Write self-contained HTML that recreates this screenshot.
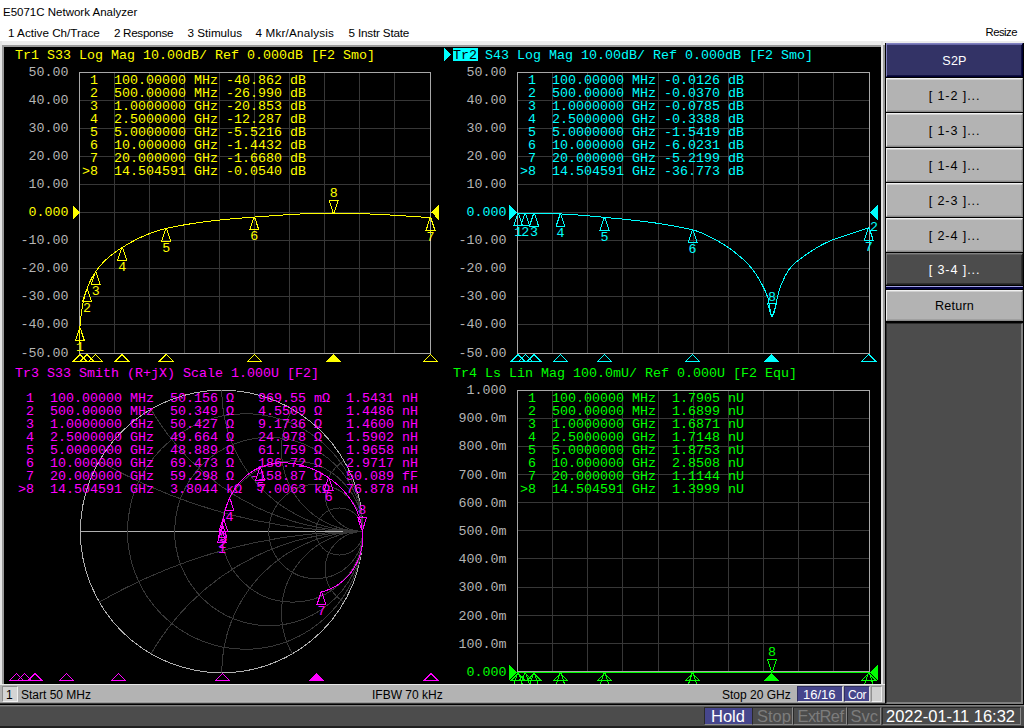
<!DOCTYPE html>
<html><head><meta charset="utf-8"><style>
html,body{margin:0;padding:0;}
body{width:1024px;height:728px;overflow:hidden;position:relative;background:#fff;}
.m{position:absolute;font-family:"Liberation Mono", monospace;font-size:13.33px;line-height:13px;white-space:pre;}
.s{position:absolute;font-family:"Liberation Sans", sans-serif;white-space:pre;line-height:normal;}
svg{position:absolute;left:0;top:0;shape-rendering:crispEdges;}
</style></head><body>
<div style="position:absolute;left:0px;top:41px;width:886px;height:4px;background:#ececec;"></div><div style="position:absolute;left:0px;top:45px;width:886px;height:2px;background:#9a9a9a;"></div><div style="position:absolute;left:0px;top:41px;width:2px;height:650px;background:#e4e4e4;"></div><div style="position:absolute;left:2px;top:45px;width:2px;height:640px;background:#9a9a9a;"></div><div style="position:absolute;left:881px;top:41px;width:2px;height:650px;background:#e4e4e4;"></div><div style="position:absolute;left:883px;top:45px;width:2px;height:640px;background:#9a9a9a;"></div><div style="position:absolute;left:885px;top:43px;width:1px;height:662px;background:#000;"></div><div style="position:absolute;left:4px;top:47px;width:877px;height:637px;background:#000;"></div><div style="position:absolute;left:0px;top:684px;width:885px;height:1px;background:#e8e8e8;"></div><div style="position:absolute;left:0px;top:685px;width:885px;height:16px;background:#b3b3b3;"></div><div style="position:absolute;left:0px;top:701px;width:885px;height:1px;background:#b8b8b8;"></div><div style="position:absolute;left:0px;top:702px;width:885px;height:1px;background:#989898;"></div><div style="position:absolute;left:0px;top:703px;width:1024px;height:1px;background:#383838;"></div><div style="position:absolute;left:0px;top:704px;width:1024px;height:1px;background:#000;"></div><div style="position:absolute;left:0px;top:705px;width:1024px;height:1px;background:#808080;"></div><div style="position:absolute;left:0px;top:706px;width:1024px;height:1px;background:#606060;"></div><div style="position:absolute;left:0px;top:707px;width:1024px;height:19px;background:#4c4c4c;"></div><div style="position:absolute;left:0px;top:726px;width:1024px;height:2px;background:#202020;"></div><div style="position:absolute;left:2px;top:686px;width:16px;height:16px;background:#d4d4d4;box-sizing:border-box;border-top:1px solid #8c8c8c;border-left:1px solid #8c8c8c;border-bottom:1px solid #f0f0f0;border-right:1px solid #f0f0f0"></div><div class="s" style="left:6px;top:688px;font-size:12px;color:#000;">1</div><div class="s" style="left:21px;top:688px;font-size:12px;color:#000;">Start 50 MHz</div><div class="s" style="left:372px;top:688px;font-size:12px;color:#000;">IFBW 70 kHz</div><div class="s" style="left:722px;top:688px;font-size:12px;color:#000;">Stop 20 GHz</div><div style="position:absolute;left:797px;top:686px;width:46px;height:16px;background:#46468c;box-sizing:border-box;border-top:1px solid #303060;border-left:1px solid #303060;border-bottom:1px solid #e0e0e0;border-right:1px solid #e0e0e0"></div><div class="s" style="left:803px;top:686.5px;font-size:13px;color:#fff;">16/16</div><div style="position:absolute;left:844px;top:686px;width:26px;height:16px;background:#46468c;box-sizing:border-box;border-top:1px solid #303060;border-left:1px solid #303060;border-bottom:1px solid #e0e0e0;border-right:1px solid #e0e0e0"></div><div class="s" style="left:848px;top:688px;font-size:12px;color:#fff;letter-spacing:-0.4px">Cor</div><div style="position:absolute;left:871px;top:686px;width:11px;height:16px;background:#d0d0d0;box-sizing:border-box;border-top:1px solid #909090;border-left:1px solid #909090;border-bottom:1px solid #f0f0f0;border-right:1px solid #f0f0f0"></div><div style="position:absolute;left:704px;top:707px;width:49px;height:18px;background:#46468c;box-sizing:border-box;border-top:1px solid #2a2a2a;border-left:1px solid #2a2a2a;border-bottom:1px solid #8a8a8a;border-right:1px solid #8a8a8a"></div><div class="s" style="left:711px;top:707px;font-size:16.5px;color:#fff;letter-spacing:0px">Hold</div><div style="position:absolute;left:752px;top:707px;width:41px;height:18px;background:#4c4c4c;box-sizing:border-box;border-top:1px solid #2a2a2a;border-left:1px solid #2a2a2a;border-bottom:1px solid #8a8a8a;border-right:1px solid #8a8a8a"></div><div class="s" style="left:757px;top:707px;font-size:16.5px;color:#7c7c7c;letter-spacing:0px">Stop</div><div style="position:absolute;left:793px;top:707px;width:54px;height:18px;background:#4c4c4c;box-sizing:border-box;border-top:1px solid #2a2a2a;border-left:1px solid #2a2a2a;border-bottom:1px solid #8a8a8a;border-right:1px solid #8a8a8a"></div><div class="s" style="left:797.5px;top:707px;font-size:16.5px;color:#7c7c7c;letter-spacing:-0.6px">ExtRef</div><div style="position:absolute;left:847px;top:707px;width:34px;height:18px;background:#4c4c4c;box-sizing:border-box;border-top:1px solid #2a2a2a;border-left:1px solid #2a2a2a;border-bottom:1px solid #8a8a8a;border-right:1px solid #8a8a8a"></div><div class="s" style="left:850.5px;top:707px;font-size:16.5px;color:#7c7c7c;letter-spacing:0px">Svc</div><div style="position:absolute;left:882px;top:707px;width:139px;height:18px;background:#4c4c4c;box-sizing:border-box;border-top:1px solid #2a2a2a;border-left:1px solid #2a2a2a;border-bottom:1px solid #8a8a8a;border-right:1px solid #8a8a8a"></div><div class="s" style="left:886px;top:707px;font-size:16.5px;color:#fff;letter-spacing:0px">2022-01-11 16:32</div><div style="position:absolute;left:886px;top:41px;width:138px;height:664px;background:#4c4c4c;"></div><div style="position:absolute;left:886px;top:41px;width:138px;height:2px;background:#ececec;"></div><div style="position:absolute;left:1023px;top:43px;width:1px;height:662px;background:#000;"></div><div style="position:absolute;left:886px;top:43px;width:137px;height:247px;background:#000;"></div><div style="position:absolute;left:886px;top:43px;width:137px;height:34px;background:#333366;box-sizing:border-box;border-top:1px solid #8080c0;border-left:1px solid #8080c0;border-bottom:1px solid #000033;border-right:1px solid #000033;box-shadow:inset 0 1px #6a6aa8, inset 0 -1px #101040, inset -1px 0 #101040;"></div><div class="s" style="left:886px;top:43.6px;width:137px;height:34px;line-height:34px;text-align:center;font-size:12.6px;color:#fff;letter-spacing:0.2px">S2P</div><div style="position:absolute;left:886px;top:78px;width:137px;height:34px;background:#b3b3b3;box-sizing:border-box;border-top:1px solid #f0f0f0;border-left:1px solid #f0f0f0;border-bottom:1px solid #888888;border-right:1px solid #888888;box-shadow:inset 0 1px #d0d0d0, inset 0 -1px #a0a0a0, inset -1px 0 #a0a0a0;"></div><div class="s" style="left:886px;top:78.6px;width:137px;height:34px;line-height:34px;text-align:center;font-size:12.6px;color:#000;letter-spacing:0.9px">[ 1-2 ]...</div><div style="position:absolute;left:886px;top:113px;width:137px;height:34px;background:#b3b3b3;box-sizing:border-box;border-top:1px solid #f0f0f0;border-left:1px solid #f0f0f0;border-bottom:1px solid #888888;border-right:1px solid #888888;box-shadow:inset 0 1px #d0d0d0, inset 0 -1px #a0a0a0, inset -1px 0 #a0a0a0;"></div><div class="s" style="left:886px;top:113.6px;width:137px;height:34px;line-height:34px;text-align:center;font-size:12.6px;color:#000;letter-spacing:0.9px">[ 1-3 ]...</div><div style="position:absolute;left:886px;top:148px;width:137px;height:34px;background:#b3b3b3;box-sizing:border-box;border-top:1px solid #f0f0f0;border-left:1px solid #f0f0f0;border-bottom:1px solid #888888;border-right:1px solid #888888;box-shadow:inset 0 1px #d0d0d0, inset 0 -1px #a0a0a0, inset -1px 0 #a0a0a0;"></div><div class="s" style="left:886px;top:148.6px;width:137px;height:34px;line-height:34px;text-align:center;font-size:12.6px;color:#000;letter-spacing:0.9px">[ 1-4 ]...</div><div style="position:absolute;left:886px;top:183px;width:137px;height:34px;background:#b3b3b3;box-sizing:border-box;border-top:1px solid #f0f0f0;border-left:1px solid #f0f0f0;border-bottom:1px solid #888888;border-right:1px solid #888888;box-shadow:inset 0 1px #d0d0d0, inset 0 -1px #a0a0a0, inset -1px 0 #a0a0a0;"></div><div class="s" style="left:886px;top:183.6px;width:137px;height:34px;line-height:34px;text-align:center;font-size:12.6px;color:#000;letter-spacing:0.9px">[ 2-3 ]...</div><div style="position:absolute;left:886px;top:218px;width:137px;height:34px;background:#b3b3b3;box-sizing:border-box;border-top:1px solid #f0f0f0;border-left:1px solid #f0f0f0;border-bottom:1px solid #888888;border-right:1px solid #888888;box-shadow:inset 0 1px #d0d0d0, inset 0 -1px #a0a0a0, inset -1px 0 #a0a0a0;"></div><div class="s" style="left:886px;top:218.6px;width:137px;height:34px;line-height:34px;text-align:center;font-size:12.6px;color:#000;letter-spacing:0.9px">[ 2-4 ]...</div><div style="position:absolute;left:886px;top:253px;width:137px;height:32px;background:#4c4c4c;box-sizing:border-box;border-top:1px solid #808080;border-left:1px solid #808080;border-bottom:1px solid #202020;border-right:1px solid #202020;box-shadow:inset 0 1px #606060, inset 0 -1px #303030, inset -1px 0 #303030;"></div><div class="s" style="left:886px;top:253.6px;width:137px;height:32px;line-height:32px;text-align:center;font-size:12.6px;color:#fff;letter-spacing:0.9px">[ 3-4 ]...</div><div style="position:absolute;left:886px;top:286px;width:137px;height:3px;background:#000040;border-top:1px solid #a0a0e0;box-sizing:border-box"></div><div style="position:absolute;left:886px;top:289px;width:137px;height:1px;background:#000;"></div><div style="position:absolute;left:886px;top:290px;width:137px;height:31px;background:#b3b3b3;box-sizing:border-box;border-top:1px solid #f0f0f0;border-left:1px solid #f0f0f0;border-bottom:1px solid #888888;border-right:1px solid #888888;box-shadow:inset 0 1px #d0d0d0, inset 0 -1px #a0a0a0, inset -1px 0 #a0a0a0;"></div><div class="s" style="left:886px;top:290.6px;width:137px;height:31px;line-height:31px;text-align:center;font-size:12.6px;color:#000;letter-spacing:0.2px">Return</div><div style="position:absolute;left:886px;top:321px;width:137px;height:2px;background:#000;"></div><div style="position:absolute;left:886px;top:323px;width:137px;height:381px;background:#4c4c4c;box-sizing:border-box;border-top:1px solid #2a2a2a;border-left:1px solid #2a2a2a;border-right:2px solid #808080;border-bottom:2px solid #808080"></div><div style="position:absolute;left:886px;top:704px;width:138px;height:1px;background:#000;"></div><div class="s" style="left:3px;top:5.5px;font-size:11.5px;color:#000;">E5071C Network Analyzer</div><div class="s" style="left:8px;top:25.5px;font-size:11.7px;color:#000;letter-spacing:0px">1 Active Ch/Trace</div><div class="s" style="left:114px;top:25.5px;font-size:11.7px;color:#000;letter-spacing:-0.33px">2 Response</div><div class="s" style="left:187.5px;top:25.5px;font-size:11.7px;color:#000;letter-spacing:0px">3 Stimulus</div><div class="s" style="left:255.5px;top:25.5px;font-size:11.7px;color:#000;letter-spacing:0.18px">4 Mkr/Analysis</div><div class="s" style="left:348.5px;top:25.5px;font-size:11.7px;color:#000;letter-spacing:-0.18px">5 Instr State</div><div class="s" style="left:985.5px;top:25.5px;font-size:11.3px;color:#000;letter-spacing:-0.5px">Resize</div>
<svg width="1024" height="728" viewBox="0 0 1024 728">
<clipPath id="blk"><rect x="4" y="47" width="877" height="637"/></clipPath><g clip-path="url(#blk)">
<path d="M114.5 72V354" stroke="#373737" fill="none" shape-rendering="crispEdges"/><path d="M149.5 72V354" stroke="#373737" fill="none" shape-rendering="crispEdges"/><path d="M184.5 72V354" stroke="#373737" fill="none" shape-rendering="crispEdges"/><path d="M219.5 72V354" stroke="#373737" fill="none" shape-rendering="crispEdges"/><path d="M254.5 72V354" stroke="#373737" fill="none" shape-rendering="crispEdges"/><path d="M289.5 72V354" stroke="#373737" fill="none" shape-rendering="crispEdges"/><path d="M324.5 72V354" stroke="#373737" fill="none" shape-rendering="crispEdges"/><path d="M359.5 72V354" stroke="#373737" fill="none" shape-rendering="crispEdges"/><path d="M394.5 72V354" stroke="#373737" fill="none" shape-rendering="crispEdges"/><path d="M79 100.5H431" stroke="#373737" fill="none" shape-rendering="crispEdges"/><path d="M79 128.5H431" stroke="#373737" fill="none" shape-rendering="crispEdges"/><path d="M79 156.5H431" stroke="#373737" fill="none" shape-rendering="crispEdges"/><path d="M79 184.5H431" stroke="#373737" fill="none" shape-rendering="crispEdges"/><path d="M79 212.5H431" stroke="#373737" fill="none" shape-rendering="crispEdges"/><path d="M79 240.5H431" stroke="#373737" fill="none" shape-rendering="crispEdges"/><path d="M79 268.5H431" stroke="#373737" fill="none" shape-rendering="crispEdges"/><path d="M79 296.5H431" stroke="#373737" fill="none" shape-rendering="crispEdges"/><path d="M79 324.5H431" stroke="#373737" fill="none" shape-rendering="crispEdges"/><path d="M79.5 72.5H430.5V353.5H79.5Z" stroke="#a8a8a8" fill="none" shape-rendering="crispEdges"/><path d="M552.5 72V354" stroke="#373737" fill="none" shape-rendering="crispEdges"/><path d="M587.5 72V354" stroke="#373737" fill="none" shape-rendering="crispEdges"/><path d="M622.5 72V354" stroke="#373737" fill="none" shape-rendering="crispEdges"/><path d="M658.5 72V354" stroke="#373737" fill="none" shape-rendering="crispEdges"/><path d="M693.5 72V354" stroke="#373737" fill="none" shape-rendering="crispEdges"/><path d="M728.5 72V354" stroke="#373737" fill="none" shape-rendering="crispEdges"/><path d="M763.5 72V354" stroke="#373737" fill="none" shape-rendering="crispEdges"/><path d="M798.5 72V354" stroke="#373737" fill="none" shape-rendering="crispEdges"/><path d="M833.5 72V354" stroke="#373737" fill="none" shape-rendering="crispEdges"/><path d="M517 100.5H870" stroke="#373737" fill="none" shape-rendering="crispEdges"/><path d="M517 128.5H870" stroke="#373737" fill="none" shape-rendering="crispEdges"/><path d="M517 156.5H870" stroke="#373737" fill="none" shape-rendering="crispEdges"/><path d="M517 184.5H870" stroke="#373737" fill="none" shape-rendering="crispEdges"/><path d="M517 212.5H870" stroke="#373737" fill="none" shape-rendering="crispEdges"/><path d="M517 240.5H870" stroke="#373737" fill="none" shape-rendering="crispEdges"/><path d="M517 268.5H870" stroke="#373737" fill="none" shape-rendering="crispEdges"/><path d="M517 296.5H870" stroke="#373737" fill="none" shape-rendering="crispEdges"/><path d="M517 324.5H870" stroke="#373737" fill="none" shape-rendering="crispEdges"/><path d="M517.5 72.5H869.5V353.5H517.5Z" stroke="#a8a8a8" fill="none" shape-rendering="crispEdges"/><path d="M552.5 390V672" stroke="#373737" fill="none" shape-rendering="crispEdges"/><path d="M587.5 390V672" stroke="#373737" fill="none" shape-rendering="crispEdges"/><path d="M622.5 390V672" stroke="#373737" fill="none" shape-rendering="crispEdges"/><path d="M658.5 390V672" stroke="#373737" fill="none" shape-rendering="crispEdges"/><path d="M693.5 390V672" stroke="#373737" fill="none" shape-rendering="crispEdges"/><path d="M728.5 390V672" stroke="#373737" fill="none" shape-rendering="crispEdges"/><path d="M763.5 390V672" stroke="#373737" fill="none" shape-rendering="crispEdges"/><path d="M798.5 390V672" stroke="#373737" fill="none" shape-rendering="crispEdges"/><path d="M833.5 390V672" stroke="#373737" fill="none" shape-rendering="crispEdges"/><path d="M517 418.5H870" stroke="#373737" fill="none" shape-rendering="crispEdges"/><path d="M517 446.5H870" stroke="#373737" fill="none" shape-rendering="crispEdges"/><path d="M517 474.5H870" stroke="#373737" fill="none" shape-rendering="crispEdges"/><path d="M517 502.5H870" stroke="#373737" fill="none" shape-rendering="crispEdges"/><path d="M517 530.5H870" stroke="#373737" fill="none" shape-rendering="crispEdges"/><path d="M517 558.5H870" stroke="#373737" fill="none" shape-rendering="crispEdges"/><path d="M517 587.5H870" stroke="#373737" fill="none" shape-rendering="crispEdges"/><path d="M517 615.5H870" stroke="#373737" fill="none" shape-rendering="crispEdges"/><path d="M517 643.5H870" stroke="#373737" fill="none" shape-rendering="crispEdges"/><path d="M517.5 390.5H869.5V671.5H517.5Z" stroke="#a8a8a8" fill="none" shape-rendering="crispEdges"/><path d="M444 48L450.5 54.5L444 61Z" fill="#00ffff"/><clipPath id="c1"><rect x="79" y="47" width="365" height="318"/></clipPath><g clip-path="url(#c1)"><path d="M79.00 344.79 L79.08 342.55 L79.17 340.50 L79.25 338.61 L79.34 336.86 L79.42 335.22 L79.50 333.69 L79.59 332.25 L79.67 330.89 L79.76 329.60 L79.84 328.38 L79.93 327.22 L80.01 326.11 L80.09 325.05 L80.18 324.04 L80.26 323.07 L80.35 322.14 L80.43 321.24 L80.51 320.38 L80.60 319.54 L80.68 318.74 L80.77 317.96 L80.85 317.20 L80.93 316.47 L81.02 315.76 L81.10 315.07 L81.19 314.40 L81.27 313.75 L81.36 313.12 L81.44 312.50 L81.52 311.90 L81.61 311.31 L81.69 310.73 L81.78 310.17 L81.86 309.63 L81.94 309.09 L82.03 308.57 L82.11 308.05 L82.20 307.55 L82.28 307.06 L82.36 306.58 L82.45 306.10 L82.53 305.64 L82.62 305.18 L82.70 304.74 L82.78 304.30 L82.87 303.87 L82.95 303.44 L83.04 303.03 L83.12 302.62 L83.21 302.21 L83.29 301.82 L83.37 301.43 L83.46 301.04 L83.54 300.67 L83.63 300.29 L83.71 299.93 L83.79 299.56 L83.88 299.21 L83.96 298.86 L84.05 298.51 L84.13 298.17 L84.21 297.83 L84.30 297.50 L84.38 297.17 L84.47 296.85 L84.55 296.53 L84.64 296.21 L84.72 295.90 L84.80 295.59 L84.89 295.29 L84.97 294.99 L85.06 294.69 L85.14 294.40 L85.22 294.11 L85.31 293.82 L85.39 293.53 L85.48 293.25 L85.56 292.98 L85.64 292.70 L85.73 292.43 L85.81 292.16 L85.90 291.90 L85.98 291.63 L86.07 291.37 L86.15 291.11 L86.23 290.86 L86.32 290.61 L86.40 290.36 L86.49 290.11 L86.57 289.86 L86.65 289.62 L86.74 289.38 L86.82 289.14 L86.91 288.90 L86.99 288.67 L87.07 288.44 L87.16 288.21 L87.24 287.98 L87.33 287.75 L87.41 287.53 L87.50 287.31 L87.58 287.09 L87.66 286.87 L87.75 286.66 L87.83 286.44 L87.92 286.23 L88.00 286.02 L88.08 285.81 L88.17 285.60 L88.25 285.40 L88.34 285.20 L88.42 284.99 L88.50 284.79 L88.59 284.60 L88.67 284.40 L88.76 284.20 L88.84 284.01 L88.93 283.82 L89.01 283.63 L89.09 283.44 L89.18 283.25 L89.26 283.06 L89.35 282.88 L89.43 282.69 L89.51 282.51 L89.60 282.33 L89.68 282.15 L89.77 281.97 L89.85 281.79 L89.93 281.61 L90.02 281.44 L90.10 281.26 L90.19 281.09 L90.27 280.92 L90.35 280.75 L90.44 280.58 L90.52 280.41 L90.61 280.24 L90.69 280.07 L90.78 279.91 L90.86 279.75 L90.94 279.58 L91.03 279.42 L91.11 279.26 L91.20 279.10 L91.28 278.94 L91.36 278.78 L91.45 278.62 L91.53 278.47 L91.62 278.31 L91.70 278.16 L91.78 278.00 L91.87 277.85 L91.95 277.70 L92.04 277.54 L92.12 277.39 L92.21 277.24 L92.29 277.10 L92.37 276.95 L92.46 276.80 L92.54 276.65 L92.63 276.51 L92.71 276.36 L92.79 276.22 L92.88 276.08 L92.96 275.93 L93.05 275.79 L93.13 275.65 L93.21 275.51 L93.30 275.37 L93.38 275.23 L93.47 275.09 L93.55 274.96 L93.64 274.82 L93.72 274.68 L93.80 274.55 L93.89 274.41 L93.97 274.28 L94.06 274.14 L94.14 274.01 L94.22 273.88 L94.31 273.75 L94.39 273.62 L94.48 273.49 L94.56 273.36 L94.64 273.23 L94.73 273.10 L94.81 272.97 L94.90 272.84 L94.98 272.72 L95.07 272.59 L95.15 272.46 L95.23 272.34 L95.32 272.21 L95.40 272.09 L95.49 271.96 L95.57 271.84 L95.65 271.72 L95.74 271.60 L96.16 271.00 L96.58 270.41 L97.00 269.83 L97.41 269.27 L97.83 268.72 L98.25 268.18 L98.67 267.64 L99.09 267.12 L99.51 266.61 L99.93 266.11 L100.35 265.62 L100.77 265.13 L101.18 264.65 L101.60 264.19 L102.02 263.72 L102.44 263.27 L102.86 262.83 L103.28 262.39 L103.70 261.95 L104.12 261.53 L104.54 261.11 L104.96 260.70 L105.37 260.29 L105.79 259.89 L106.21 259.49 L106.63 259.10 L107.05 258.72 L107.47 258.34 L107.89 257.97 L108.31 257.60 L108.73 257.23 L109.15 256.87 L109.56 256.52 L109.98 256.17 L110.40 255.82 L110.82 255.48 L111.24 255.14 L111.66 254.81 L112.08 254.48 L112.50 254.15 L112.92 253.83 L113.34 253.51 L113.75 253.20 L114.17 252.89 L114.59 252.58 L115.01 252.27 L115.43 251.97 L115.85 251.67 L116.27 251.38 L116.69 251.09 L117.11 250.80 L117.52 250.51 L117.94 250.23 L118.36 249.95 L118.78 249.67 L119.20 249.40 L119.62 249.12 L120.04 248.86 L120.46 248.59 L120.88 248.32 L121.30 248.06 L121.71 247.80 L122.13 247.55 L122.55 247.29 L122.97 247.04 L123.39 246.78 L123.81 246.53 L124.23 246.28 L124.65 246.02 L125.07 245.77 L125.49 245.52 L125.90 245.27 L126.32 245.02 L126.74 244.77 L127.16 244.53 L127.58 244.28 L128.00 244.04 L128.42 243.80 L128.84 243.55 L129.26 243.31 L129.68 243.07 L130.09 242.84 L130.51 242.60 L130.93 242.37 L131.35 242.13 L131.77 241.90 L132.19 241.67 L132.61 241.44 L133.03 241.22 L133.45 240.99 L133.86 240.77 L134.28 240.54 L134.70 240.32 L135.12 240.10 L135.54 239.89 L135.96 239.67 L136.38 239.46 L136.80 239.24 L137.22 239.03 L137.64 238.82 L138.05 238.62 L138.47 238.41 L138.89 238.21 L139.31 238.00 L139.73 237.80 L140.15 237.60 L140.57 237.41 L140.99 237.21 L141.41 237.02 L141.83 236.83 L142.24 236.64 L142.66 236.45 L143.08 236.26 L143.50 236.08 L143.92 235.89 L144.34 235.71 L144.76 235.53 L145.18 235.35 L145.60 235.18 L146.02 235.00 L146.43 234.83 L146.85 234.66 L147.27 234.49 L147.69 234.32 L148.11 234.16 L148.53 233.99 L148.95 233.83 L149.37 233.67 L149.79 233.51 L150.20 233.35 L150.62 233.20 L151.04 233.04 L151.46 232.89 L151.88 232.74 L152.30 232.59 L152.72 232.44 L153.14 232.29 L153.56 232.15 L153.98 232.01 L154.39 231.87 L154.81 231.73 L155.23 231.59 L155.65 231.45 L156.07 231.32 L156.49 231.18 L156.91 231.05 L157.33 230.92 L157.75 230.79 L158.17 230.67 L158.58 230.54 L159.00 230.42 L159.42 230.29 L159.84 230.17 L160.26 230.05 L160.68 229.94 L161.10 229.82 L161.52 229.70 L161.94 229.59 L162.36 229.48 L162.77 229.37 L163.19 229.26 L163.61 229.15 L164.03 229.05 L164.45 228.94 L164.87 228.84 L165.29 228.74 L165.71 228.64 L166.13 228.54 L166.55 228.44 L166.96 228.34 L167.38 228.24 L167.80 228.15 L168.22 228.05 L168.64 227.96 L169.06 227.87 L169.48 227.77 L169.90 227.68 L170.32 227.59 L170.73 227.50 L171.15 227.41 L171.57 227.32 L171.99 227.23 L172.41 227.14 L172.83 227.05 L173.25 226.97 L173.67 226.88 L174.09 226.79 L174.51 226.71 L174.92 226.62 L175.34 226.54 L175.76 226.46 L176.18 226.37 L176.60 226.29 L177.02 226.21 L177.44 226.13 L177.86 226.05 L178.28 225.97 L178.70 225.89 L179.11 225.81 L179.53 225.73 L179.95 225.65 L180.37 225.58 L180.79 225.50 L181.21 225.42 L181.63 225.35 L182.05 225.27 L182.47 225.20 L182.89 225.12 L183.30 225.05 L183.72 224.97 L184.14 224.90 L184.56 224.83 L184.98 224.76 L185.40 224.69 L185.82 224.61 L186.24 224.54 L186.66 224.47 L187.07 224.40 L187.49 224.33 L187.91 224.27 L188.33 224.20 L188.75 224.13 L189.17 224.06 L189.59 223.99 L190.01 223.93 L190.43 223.86 L190.85 223.80 L191.26 223.73 L191.68 223.66 L192.10 223.60 L192.52 223.54 L192.94 223.47 L193.36 223.41 L193.78 223.35 L194.20 223.28 L194.62 223.22 L195.04 223.16 L195.45 223.10 L195.87 223.04 L196.29 222.97 L196.71 222.91 L197.13 222.85 L197.55 222.79 L197.97 222.73 L198.39 222.68 L198.81 222.62 L199.23 222.56 L199.64 222.50 L200.06 222.44 L200.48 222.39 L200.90 222.33 L201.32 222.27 L201.74 222.21 L202.16 222.16 L202.58 222.10 L203.00 222.05 L203.41 221.99 L203.83 221.94 L204.25 221.88 L204.67 221.83 L205.09 221.78 L205.51 221.72 L205.93 221.67 L206.35 221.62 L206.77 221.56 L207.19 221.51 L207.60 221.46 L208.02 221.41 L208.44 221.35 L208.86 221.30 L209.28 221.25 L209.70 221.20 L210.12 221.15 L210.54 221.10 L210.96 221.05 L211.38 221.00 L211.79 220.95 L212.21 220.90 L212.63 220.86 L213.05 220.81 L213.47 220.76 L213.89 220.71 L214.31 220.66 L214.73 220.62 L215.15 220.57 L215.57 220.52 L215.98 220.47 L216.40 220.43 L216.82 220.38 L217.24 220.34 L217.66 220.29 L218.08 220.24 L218.50 220.20 L218.92 220.15 L219.34 220.11 L219.76 220.06 L220.17 220.02 L220.59 219.98 L221.01 219.93 L221.43 219.89 L221.85 219.85 L222.27 219.80 L222.69 219.76 L223.11 219.72 L223.53 219.67 L223.94 219.63 L224.36 219.59 L224.78 219.55 L225.20 219.51 L225.62 219.46 L226.04 219.42 L226.46 219.38 L226.88 219.34 L227.30 219.30 L227.72 219.26 L228.13 219.22 L228.55 219.18 L228.97 219.14 L229.39 219.10 L229.81 219.06 L230.23 219.02 L230.65 218.98 L231.07 218.94 L231.49 218.91 L231.91 218.87 L232.32 218.83 L232.74 218.79 L233.16 218.75 L233.58 218.71 L234.00 218.68 L234.42 218.64 L234.84 218.60 L235.26 218.57 L235.68 218.53 L236.10 218.49 L236.51 218.46 L236.93 218.42 L237.35 218.38 L237.77 218.35 L238.19 218.31 L238.61 218.28 L239.03 218.24 L239.45 218.21 L239.87 218.17 L240.28 218.14 L240.70 218.10 L241.12 218.07 L241.54 218.03 L241.96 218.00 L242.38 217.96 L242.80 217.93 L243.22 217.90 L243.64 217.86 L244.06 217.83 L244.47 217.80 L244.89 217.76 L245.31 217.73 L245.73 217.70 L246.15 217.66 L246.57 217.63 L246.99 217.60 L247.41 217.57 L247.83 217.53 L248.25 217.50 L248.66 217.47 L249.08 217.44 L249.50 217.41 L249.92 217.38 L250.34 217.34 L250.76 217.31 L251.18 217.28 L251.60 217.25 L252.02 217.22 L252.44 217.19 L252.85 217.16 L253.27 217.13 L253.69 217.10 L254.11 217.07 L254.53 217.04 L254.95 217.01 L255.37 216.98 L255.79 216.95 L256.21 216.92 L256.62 216.89 L257.04 216.86 L257.46 216.83 L257.88 216.80 L258.30 216.77 L258.72 216.74 L259.14 216.70 L259.56 216.67 L259.98 216.64 L260.40 216.61 L260.81 216.58 L261.23 216.55 L261.65 216.52 L262.07 216.49 L262.49 216.46 L262.91 216.42 L263.33 216.39 L263.75 216.36 L264.17 216.33 L264.59 216.30 L265.00 216.27 L265.42 216.24 L265.84 216.21 L266.26 216.17 L266.68 216.14 L267.10 216.11 L267.52 216.08 L267.94 216.05 L268.36 216.02 L268.78 215.99 L269.19 215.96 L269.61 215.93 L270.03 215.89 L270.45 215.86 L270.87 215.83 L271.29 215.80 L271.71 215.77 L272.13 215.74 L272.55 215.71 L272.96 215.68 L273.38 215.65 L273.80 215.62 L274.22 215.59 L274.64 215.56 L275.06 215.53 L275.48 215.50 L275.90 215.47 L276.32 215.44 L276.74 215.41 L277.15 215.38 L277.57 215.35 L277.99 215.32 L278.41 215.29 L278.83 215.26 L279.25 215.23 L279.67 215.20 L280.09 215.18 L280.51 215.15 L280.93 215.12 L281.34 215.09 L281.76 215.06 L282.18 215.03 L282.60 215.01 L283.02 214.98 L283.44 214.95 L283.86 214.92 L284.28 214.90 L284.70 214.87 L285.12 214.84 L285.53 214.81 L285.95 214.79 L286.37 214.76 L286.79 214.74 L287.21 214.71 L287.63 214.68 L288.05 214.66 L288.47 214.63 L288.89 214.61 L289.31 214.58 L289.72 214.55 L290.14 214.53 L290.56 214.51 L290.98 214.48 L291.40 214.46 L291.82 214.43 L292.24 214.41 L292.66 214.38 L293.08 214.36 L293.49 214.34 L293.91 214.31 L294.33 214.29 L294.75 214.27 L295.17 214.24 L295.59 214.22 L296.01 214.20 L296.43 214.18 L296.85 214.15 L297.27 214.13 L297.68 214.11 L298.10 214.09 L298.52 214.07 L298.94 214.05 L299.36 214.03 L299.78 214.01 L300.20 213.99 L300.62 213.97 L301.04 213.95 L301.46 213.93 L301.87 213.91 L302.29 213.89 L302.71 213.87 L303.13 213.85 L303.55 213.83 L303.97 213.81 L304.39 213.80 L304.81 213.78 L305.23 213.76 L305.65 213.74 L306.06 213.73 L306.48 213.71 L306.90 213.69 L307.32 213.68 L307.74 213.66 L308.16 213.64 L308.58 213.63 L309.00 213.61 L309.42 213.60 L309.83 213.58 L310.25 213.57 L310.67 213.55 L311.09 213.54 L311.51 213.53 L311.93 213.51 L312.35 213.50 L312.77 213.48 L313.19 213.47 L313.61 213.46 L314.02 213.45 L314.44 213.43 L314.86 213.42 L315.28 213.41 L315.70 213.40 L316.12 213.39 L316.54 213.38 L316.96 213.37 L317.38 213.36 L317.80 213.35 L318.21 213.34 L318.63 213.33 L319.05 213.32 L319.47 213.31 L319.89 213.30 L320.31 213.29 L320.73 213.28 L321.15 213.27 L321.57 213.26 L321.99 213.26 L322.40 213.25 L322.82 213.24 L323.24 213.24 L323.66 213.23 L324.08 213.22 L324.50 213.22 L324.92 213.21 L325.34 213.21 L325.76 213.20 L326.17 213.20 L326.59 213.19 L327.01 213.19 L327.43 213.18 L327.85 213.18 L328.27 213.17 L328.69 213.17 L329.11 213.17 L329.53 213.17 L329.95 213.16 L330.36 213.16 L330.78 213.16 L331.20 213.16 L331.62 213.16 L332.04 213.15 L332.46 213.15 L332.88 213.15 L333.30 213.15 L333.72 213.15 L334.14 213.15 L334.55 213.15 L334.97 213.15 L335.39 213.15 L335.81 213.16 L336.23 213.16 L336.65 213.16 L337.07 213.16 L337.49 213.16 L337.91 213.17 L338.33 213.17 L338.74 213.17 L339.16 213.18 L339.58 213.18 L340.00 213.18 L340.42 213.19 L340.84 213.19 L341.26 213.20 L341.68 213.20 L342.10 213.21 L342.52 213.21 L342.93 213.22 L343.35 213.22 L343.77 213.23 L344.19 213.24 L344.61 213.24 L345.03 213.25 L345.45 213.26 L345.87 213.26 L346.29 213.27 L346.70 213.28 L347.12 213.29 L347.54 213.29 L347.96 213.30 L348.38 213.31 L348.80 213.32 L349.22 213.33 L349.64 213.34 L350.06 213.35 L350.48 213.36 L350.89 213.37 L351.31 213.38 L351.73 213.39 L352.15 213.40 L352.57 213.41 L352.99 213.42 L353.41 213.43 L353.83 213.44 L354.25 213.45 L354.67 213.47 L355.08 213.48 L355.50 213.49 L355.92 213.50 L356.34 213.51 L356.76 213.53 L357.18 213.54 L357.60 213.55 L358.02 213.57 L358.44 213.58 L358.86 213.59 L359.27 213.61 L359.69 213.62 L360.11 213.63 L360.53 213.65 L360.95 213.66 L361.37 213.68 L361.79 213.69 L362.21 213.71 L362.63 213.72 L363.04 213.74 L363.46 213.75 L363.88 213.77 L364.30 213.78 L364.72 213.80 L365.14 213.82 L365.56 213.83 L365.98 213.85 L366.40 213.87 L366.82 213.88 L367.23 213.90 L367.65 213.92 L368.07 213.93 L368.49 213.95 L368.91 213.97 L369.33 213.99 L369.75 214.00 L370.17 214.02 L370.59 214.04 L371.01 214.06 L371.42 214.08 L371.84 214.10 L372.26 214.11 L372.68 214.13 L373.10 214.15 L373.52 214.17 L373.94 214.19 L374.36 214.21 L374.78 214.23 L375.20 214.25 L375.61 214.27 L376.03 214.29 L376.45 214.31 L376.87 214.33 L377.29 214.35 L377.71 214.37 L378.13 214.39 L378.55 214.41 L378.97 214.43 L379.38 214.45 L379.80 214.47 L380.22 214.50 L380.64 214.52 L381.06 214.54 L381.48 214.56 L381.90 214.58 L382.32 214.60 L382.74 214.62 L383.16 214.65 L383.57 214.67 L383.99 214.69 L384.41 214.71 L384.83 214.74 L385.25 214.76 L385.67 214.78 L386.09 214.80 L386.51 214.83 L386.93 214.85 L387.35 214.87 L387.76 214.90 L388.18 214.92 L388.60 214.94 L389.02 214.97 L389.44 214.99 L389.86 215.01 L390.28 215.04 L390.70 215.06 L391.12 215.09 L391.54 215.11 L391.95 215.13 L392.37 215.16 L392.79 215.18 L393.21 215.21 L393.63 215.23 L394.05 215.26 L394.47 215.28 L394.89 215.31 L395.31 215.33 L395.72 215.36 L396.14 215.38 L396.56 215.41 L396.98 215.43 L397.40 215.46 L397.82 215.48 L398.24 215.51 L398.66 215.53 L399.08 215.56 L399.50 215.59 L399.91 215.61 L400.33 215.64 L400.75 215.66 L401.17 215.69 L401.59 215.72 L402.01 215.74 L402.43 215.77 L402.85 215.80 L403.27 215.82 L403.69 215.85 L404.10 215.88 L404.52 215.90 L404.94 215.93 L405.36 215.96 L405.78 215.98 L406.20 216.01 L406.62 216.04 L407.04 216.07 L407.46 216.09 L407.88 216.12 L408.29 216.15 L408.71 216.18 L409.13 216.20 L409.55 216.23 L409.97 216.26 L410.39 216.29 L410.81 216.31 L411.23 216.34 L411.65 216.37 L412.07 216.40 L412.48 216.43 L412.90 216.45 L413.32 216.48 L413.74 216.51 L414.16 216.54 L414.58 216.57 L415.00 216.60 L415.42 216.62 L415.84 216.65 L416.25 216.68 L416.67 216.71 L417.09 216.74 L417.51 216.77 L417.93 216.80 L418.35 216.83 L418.77 216.85 L419.19 216.88 L419.61 216.91 L420.03 216.94 L420.44 216.97 L420.86 217.00 L421.28 217.03 L421.70 217.06 L422.12 217.09 L422.54 217.12 L422.96 217.15 L423.38 217.18 L423.80 217.21 L424.22 217.24 L424.63 217.27 L425.05 217.30 L425.47 217.33 L425.89 217.36 L426.31 217.39 L426.73 217.42 L427.15 217.45 L427.57 217.48 L427.99 217.51 L428.41 217.54 L428.82 217.57 L429.24 217.60 L429.66 217.63 L430.08 217.66 L430.50 217.69" stroke="#ffff00" stroke-width="1" fill="none" stroke-linejoin="round"/></g><path d="M517.30 213.03 L517.59 213.03 L517.89 213.03 L518.18 213.04 L518.47 213.04 L518.77 213.04 L519.06 213.04 L519.35 213.05 L519.65 213.05 L519.94 213.05 L520.23 213.05 L520.52 213.06 L520.82 213.06 L521.11 213.06 L521.40 213.06 L521.70 213.07 L521.99 213.07 L522.28 213.07 L522.58 213.08 L522.87 213.08 L523.16 213.08 L523.46 213.08 L523.75 213.09 L524.04 213.09 L524.34 213.09 L524.63 213.10 L524.92 213.10 L525.22 213.10 L525.51 213.11 L525.80 213.11 L526.09 213.11 L526.39 213.12 L526.68 213.12 L526.97 213.12 L527.27 213.13 L527.56 213.13 L527.85 213.13 L528.15 213.14 L528.44 213.14 L528.73 213.14 L529.03 213.15 L529.32 213.15 L529.61 213.16 L529.91 213.16 L530.20 213.16 L530.49 213.17 L530.79 213.17 L531.08 213.18 L531.37 213.18 L531.66 213.18 L531.96 213.19 L532.25 213.19 L532.54 213.20 L532.84 213.20 L533.13 213.21 L533.42 213.21 L533.72 213.22 L534.01 213.22 L534.30 213.23 L534.60 213.23 L534.89 213.24 L535.18 213.24 L535.48 213.25 L535.77 213.25 L536.06 213.26 L536.36 213.26 L536.65 213.27 L536.94 213.27 L537.23 213.28 L537.53 213.28 L537.82 213.29 L538.11 213.30 L538.41 213.30 L538.70 213.31 L538.99 213.31 L539.29 213.32 L539.58 213.33 L539.87 213.33 L540.17 213.34 L540.46 213.35 L540.75 213.35 L541.05 213.36 L541.34 213.36 L541.63 213.37 L541.93 213.38 L542.22 213.38 L542.51 213.39 L542.81 213.40 L543.10 213.41 L543.39 213.41 L543.68 213.42 L543.98 213.43 L544.27 213.43 L544.56 213.44 L544.86 213.45 L545.15 213.46 L545.44 213.46 L545.74 213.47 L546.03 213.48 L546.32 213.49 L546.62 213.50 L546.91 213.50 L547.20 213.51 L547.50 213.52 L547.79 213.53 L548.08 213.54 L548.38 213.54 L548.67 213.55 L548.96 213.56 L549.25 213.57 L549.55 213.58 L549.84 213.59 L550.13 213.60 L550.43 213.60 L550.72 213.61 L551.01 213.62 L551.31 213.63 L551.60 213.64 L551.89 213.65 L552.19 213.66 L552.48 213.67 L552.77 213.68 L553.07 213.69 L553.36 213.70 L553.65 213.71 L553.95 213.72 L554.24 213.73 L554.53 213.74 L554.82 213.75 L555.12 213.76 L555.41 213.77 L555.70 213.78 L556.00 213.79 L556.29 213.80 L556.58 213.81 L556.88 213.82 L557.17 213.83 L557.46 213.84 L557.76 213.85 L558.05 213.86 L558.34 213.87 L558.64 213.88 L558.93 213.89 L559.22 213.90 L559.52 213.92 L559.81 213.93 L560.10 213.94 L560.39 213.95 L560.69 213.96 L560.98 213.97 L561.27 213.98 L561.57 214.00 L561.86 214.01 L562.15 214.02 L562.45 214.03 L562.74 214.05 L563.03 214.06 L563.33 214.07 L563.62 214.09 L563.91 214.10 L564.21 214.12 L564.50 214.13 L564.79 214.14 L565.09 214.16 L565.38 214.17 L565.67 214.19 L565.96 214.20 L566.26 214.22 L566.55 214.23 L566.84 214.25 L567.14 214.27 L567.43 214.28 L567.72 214.30 L568.02 214.32 L568.31 214.33 L568.60 214.35 L568.90 214.37 L569.19 214.38 L569.48 214.40 L569.78 214.42 L570.07 214.44 L570.36 214.45 L570.66 214.47 L570.95 214.49 L571.24 214.51 L571.53 214.53 L571.83 214.55 L572.12 214.56 L572.41 214.58 L572.71 214.60 L573.00 214.62 L573.29 214.64 L573.59 214.66 L573.88 214.68 L574.17 214.70 L574.47 214.72 L574.76 214.74 L575.05 214.76 L575.35 214.78 L575.64 214.80 L575.93 214.82 L576.23 214.85 L576.52 214.87 L576.81 214.89 L577.10 214.91 L577.40 214.93 L577.69 214.95 L577.98 214.97 L578.28 215.00 L578.57 215.02 L578.86 215.04 L579.16 215.06 L579.45 215.09 L579.74 215.11 L580.04 215.13 L580.33 215.15 L580.62 215.18 L580.92 215.20 L581.21 215.22 L581.50 215.25 L581.80 215.27 L582.09 215.29 L582.38 215.32 L582.67 215.34 L582.97 215.36 L583.26 215.39 L583.55 215.41 L583.85 215.44 L584.14 215.46 L584.43 215.49 L584.73 215.51 L585.02 215.54 L585.31 215.56 L585.61 215.58 L585.90 215.61 L586.19 215.63 L586.49 215.66 L586.78 215.69 L587.07 215.71 L587.37 215.74 L587.66 215.76 L587.95 215.79 L588.24 215.81 L588.54 215.84 L588.83 215.86 L589.12 215.89 L589.42 215.92 L589.71 215.94 L590.00 215.97 L590.30 216.00 L590.59 216.02 L590.88 216.05 L591.18 216.07 L591.47 216.10 L591.76 216.13 L592.06 216.15 L592.35 216.18 L592.64 216.21 L592.94 216.23 L593.23 216.26 L593.52 216.29 L593.82 216.32 L594.11 216.34 L594.40 216.37 L594.69 216.40 L594.99 216.42 L595.28 216.45 L595.57 216.48 L595.87 216.51 L596.16 216.53 L596.45 216.56 L596.75 216.59 L597.04 216.62 L597.33 216.64 L597.63 216.67 L597.92 216.70 L598.21 216.73 L598.51 216.76 L598.80 216.78 L599.09 216.81 L599.39 216.84 L599.68 216.87 L599.97 216.90 L600.26 216.92 L600.56 216.95 L600.85 216.98 L601.14 217.01 L601.44 217.04 L601.73 217.06 L602.02 217.09 L602.32 217.12 L602.61 217.15 L602.90 217.18 L603.20 217.21 L603.49 217.23 L603.78 217.26 L604.08 217.29 L604.37 217.32 L604.66 217.35 L604.96 217.38 L605.25 217.40 L605.54 217.43 L605.83 217.46 L606.13 217.49 L606.42 217.52 L606.71 217.55 L607.01 217.57 L607.30 217.60 L607.59 217.63 L607.89 217.66 L608.18 217.69 L608.47 217.72 L608.77 217.74 L609.06 217.77 L609.35 217.80 L609.65 217.83 L609.94 217.86 L610.23 217.89 L610.53 217.91 L610.82 217.94 L611.11 217.97 L611.40 218.00 L611.70 218.03 L611.99 218.06 L612.28 218.08 L612.58 218.11 L612.87 218.14 L613.16 218.17 L613.46 218.20 L613.75 218.23 L614.04 218.26 L614.34 218.28 L614.63 218.31 L614.92 218.34 L615.22 218.37 L615.51 218.40 L615.80 218.43 L616.10 218.46 L616.39 218.49 L616.68 218.51 L616.97 218.54 L617.27 218.57 L617.56 218.60 L617.85 218.63 L618.15 218.66 L618.44 218.69 L618.73 218.72 L619.03 218.75 L619.32 218.78 L619.61 218.81 L619.91 218.83 L620.20 218.86 L620.49 218.89 L620.79 218.92 L621.08 218.95 L621.37 218.98 L621.67 219.01 L621.96 219.04 L622.25 219.07 L622.54 219.10 L622.84 219.13 L623.13 219.16 L623.42 219.19 L623.72 219.22 L624.01 219.25 L624.30 219.28 L624.60 219.31 L624.89 219.34 L625.18 219.37 L625.48 219.40 L625.77 219.43 L626.06 219.46 L626.36 219.49 L626.65 219.52 L626.94 219.55 L627.24 219.58 L627.53 219.61 L627.82 219.65 L628.11 219.68 L628.41 219.71 L628.70 219.74 L628.99 219.77 L629.29 219.80 L629.58 219.83 L629.87 219.86 L630.17 219.90 L630.46 219.93 L630.75 219.96 L631.05 219.99 L631.34 220.02 L631.63 220.05 L631.93 220.09 L632.22 220.12 L632.51 220.15 L632.81 220.18 L633.10 220.21 L633.39 220.25 L633.68 220.28 L633.98 220.31 L634.27 220.34 L634.56 220.38 L634.86 220.41 L635.15 220.44 L635.44 220.48 L635.74 220.51 L636.03 220.54 L636.32 220.57 L636.62 220.61 L636.91 220.64 L637.20 220.68 L637.50 220.71 L637.79 220.74 L638.08 220.78 L638.38 220.81 L638.67 220.84 L638.96 220.88 L639.25 220.91 L639.55 220.95 L639.84 220.98 L640.13 221.02 L640.43 221.05 L640.72 221.09 L641.01 221.12 L641.31 221.16 L641.60 221.19 L641.89 221.23 L642.19 221.26 L642.48 221.30 L642.77 221.33 L643.07 221.37 L643.36 221.40 L643.65 221.44 L643.95 221.48 L644.24 221.51 L644.53 221.55 L644.83 221.59 L645.12 221.62 L645.41 221.66 L645.70 221.70 L646.00 221.73 L646.29 221.77 L646.58 221.81 L646.88 221.85 L647.17 221.88 L647.46 221.92 L647.76 221.96 L648.05 222.00 L648.34 222.03 L648.64 222.07 L648.93 222.11 L649.22 222.15 L649.52 222.19 L649.81 222.23 L650.10 222.27 L650.40 222.31 L650.69 222.34 L650.98 222.38 L651.27 222.42 L651.57 222.46 L651.86 222.50 L652.15 222.54 L652.45 222.58 L652.74 222.62 L653.03 222.66 L653.33 222.70 L653.62 222.74 L653.91 222.79 L654.21 222.83 L654.50 222.87 L654.79 222.91 L655.09 222.95 L655.38 222.99 L655.67 223.03 L655.97 223.08 L656.26 223.12 L656.55 223.16 L656.84 223.20 L657.14 223.25 L657.43 223.29 L657.72 223.33 L658.02 223.38 L658.31 223.42 L658.60 223.46 L658.90 223.51 L659.19 223.55 L659.48 223.59 L659.78 223.64 L660.07 223.68 L660.36 223.73 L660.66 223.77 L660.95 223.82 L661.24 223.86 L661.54 223.91 L661.83 223.95 L662.12 224.00 L662.41 224.04 L662.71 224.09 L663.00 224.14 L663.29 224.18 L663.59 224.23 L663.88 224.28 L664.17 224.32 L664.47 224.37 L664.76 224.42 L665.05 224.46 L665.35 224.51 L665.64 224.56 L665.93 224.61 L666.23 224.66 L666.52 224.70 L666.81 224.75 L667.11 224.80 L667.40 224.85 L667.69 224.90 L667.98 224.95 L668.28 225.00 L668.57 225.05 L668.86 225.10 L669.16 225.15 L669.45 225.20 L669.74 225.25 L670.04 225.30 L670.33 225.35 L670.62 225.40 L670.92 225.46 L671.21 225.51 L671.50 225.56 L671.80 225.61 L672.09 225.66 L672.38 225.72 L672.68 225.77 L672.97 225.82 L673.26 225.88 L673.55 225.93 L673.85 225.98 L674.14 226.04 L674.43 226.09 L674.73 226.15 L675.02 226.20 L675.31 226.26 L675.61 226.31 L675.90 226.37 L676.19 226.42 L676.49 226.48 L676.78 226.53 L677.07 226.59 L677.37 226.65 L677.66 226.70 L677.95 226.76 L678.25 226.82 L678.54 226.87 L678.83 226.93 L679.12 226.99 L679.42 227.05 L679.71 227.11 L680.00 227.16 L680.30 227.22 L680.59 227.28 L680.88 227.34 L681.18 227.40 L681.47 227.46 L681.76 227.52 L682.06 227.58 L682.35 227.64 L682.64 227.70 L682.94 227.76 L683.23 227.82 L683.52 227.89 L683.82 227.95 L684.11 228.01 L684.40 228.07 L684.69 228.14 L684.99 228.20 L685.28 228.26 L685.57 228.32 L685.87 228.39 L686.16 228.45 L686.45 228.52 L686.75 228.58 L687.04 228.64 L687.33 228.71 L687.63 228.78 L687.92 228.84 L688.21 228.91 L688.51 228.97 L688.80 229.04 L689.09 229.11 L689.39 229.17 L689.68 229.24 L689.97 229.31 L690.26 229.37 L690.56 229.44 L690.85 229.51 L691.14 229.58 L691.44 229.65 L691.73 229.72 L692.02 229.79 L692.32 229.86 L692.61 229.93 L692.90 230.00 L693.20 230.07 L693.49 230.14 L693.78 230.22 L694.08 230.30 L694.37 230.38 L694.66 230.46 L694.96 230.55 L695.25 230.64 L695.54 230.72 L695.84 230.81 L696.13 230.91 L696.42 231.00 L696.71 231.10 L697.01 231.19 L697.30 231.29 L697.59 231.39 L697.89 231.49 L698.18 231.60 L698.47 231.70 L698.77 231.81 L699.06 231.92 L699.35 232.03 L699.65 232.14 L699.94 232.26 L700.23 232.37 L700.53 232.49 L700.82 232.60 L701.11 232.72 L701.41 232.84 L701.70 232.97 L701.99 233.09 L702.28 233.21 L702.58 233.34 L702.87 233.47 L703.16 233.59 L703.46 233.72 L703.75 233.86 L704.04 233.99 L704.34 234.12 L704.63 234.25 L704.92 234.39 L705.22 234.53 L705.51 234.66 L705.80 234.80 L706.10 234.94 L706.39 235.08 L706.68 235.22 L706.98 235.37 L707.27 235.51 L707.56 235.65 L707.85 235.80 L708.15 235.94 L708.44 236.09 L708.73 236.24 L709.03 236.39 L709.32 236.54 L709.61 236.69 L709.91 236.84 L710.20 236.99 L710.49 237.14 L710.79 237.29 L711.08 237.45 L711.37 237.60 L711.67 237.75 L711.96 237.91 L712.25 238.06 L712.55 238.22 L712.84 238.38 L713.13 238.53 L713.42 238.69 L713.72 238.85 L714.01 239.01 L714.30 239.17 L714.60 239.32 L714.89 239.48 L715.18 239.64 L715.48 239.80 L715.77 239.96 L716.06 240.12 L716.36 240.28 L716.65 240.45 L716.94 240.61 L717.24 240.77 L717.53 240.93 L717.82 241.09 L718.12 241.25 L718.41 241.41 L718.70 241.57 L718.99 241.74 L719.29 241.90 L719.58 242.06 L719.87 242.23 L720.17 242.39 L720.46 242.56 L720.75 242.73 L721.05 242.90 L721.34 243.08 L721.63 243.25 L721.93 243.42 L722.22 243.60 L722.51 243.78 L722.81 243.96 L723.10 244.14 L723.39 244.32 L723.69 244.50 L723.98 244.69 L724.27 244.87 L724.56 245.06 L724.86 245.25 L725.15 245.44 L725.44 245.63 L725.74 245.82 L726.03 246.01 L726.32 246.21 L726.62 246.41 L726.91 246.60 L727.20 246.80 L727.50 247.00 L727.79 247.20 L728.08 247.40 L728.38 247.61 L728.67 247.81 L728.96 248.02 L729.26 248.23 L729.55 248.43 L729.84 248.64 L730.13 248.85 L730.43 249.07 L730.72 249.28 L731.01 249.49 L731.31 249.71 L731.60 249.93 L731.89 250.14 L732.19 250.36 L732.48 250.58 L732.77 250.80 L733.07 251.03 L733.36 251.25 L733.65 251.47 L733.95 251.70 L734.24 251.93 L734.53 252.16 L734.83 252.38 L735.12 252.62 L735.41 252.85 L735.70 253.08 L736.00 253.31 L736.29 253.55 L736.58 253.78 L736.88 254.02 L737.17 254.26 L737.46 254.50 L737.76 254.74 L738.05 254.98 L738.34 255.22 L738.64 255.47 L738.93 255.71 L739.22 255.96 L739.52 256.20 L739.81 256.45 L740.10 256.70 L740.40 256.95 L740.69 257.21 L740.98 257.46 L741.27 257.72 L741.57 257.97 L741.86 258.23 L742.15 258.50 L742.45 258.76 L742.74 259.03 L743.03 259.29 L743.33 259.56 L743.62 259.84 L743.91 260.11 L744.21 260.39 L744.50 260.66 L744.79 260.95 L745.09 261.23 L745.38 261.52 L745.67 261.80 L745.97 262.10 L746.26 262.39 L746.55 262.69 L746.85 262.99 L747.14 263.29 L747.43 263.59 L747.72 263.90 L748.02 264.21 L748.31 264.53 L748.60 264.85 L748.90 265.17 L749.19 265.49 L749.48 265.82 L749.78 266.15 L750.07 266.49 L750.36 266.82 L750.66 267.17 L750.95 267.51 L751.24 267.86 L751.54 268.21 L751.83 268.57 L752.12 268.93 L752.42 269.30 L752.71 269.67 L753.00 270.04 L753.29 270.43 L753.59 270.82 L753.88 271.22 L754.17 271.62 L754.47 272.03 L754.76 272.45 L755.05 272.87 L755.35 273.30 L755.64 273.73 L755.93 274.17 L756.23 274.62 L756.52 275.08 L756.81 275.53 L757.11 276.00 L757.40 276.47 L757.69 276.95 L757.99 277.43 L758.28 277.92 L758.57 278.41 L758.86 278.91 L759.16 279.42 L759.45 279.93 L759.74 280.45 L760.04 280.97 L760.33 281.50 L760.62 282.03 L760.92 282.57 L761.21 283.11 L761.50 283.66 L761.80 284.21 L762.09 284.77 L762.38 285.33 L762.68 285.89 L762.97 286.45 L763.26 287.02 L763.56 287.60 L763.85 288.18 L764.14 288.77 L764.43 289.38 L764.73 290.00 L765.02 290.63 L765.31 291.28 L765.61 291.95 L765.90 292.64 L766.19 293.36 L766.49 294.09 L766.78 294.86 L767.07 295.65 L767.37 296.47 L767.66 297.33 L767.95 298.22 L768.25 299.22 L768.54 300.49 L768.83 301.98 L769.13 303.63 L769.42 305.38 L769.71 307.18 L770.00 308.96 L770.30 310.68 L770.59 312.27 L770.88 313.67 L771.18 314.84 L771.47 315.71 L771.76 316.22 L772.06 316.33 L772.35 316.19 L772.64 315.88 L772.94 315.42 L773.23 314.82 L773.52 314.09 L773.82 313.23 L774.11 312.27 L774.40 311.20 L774.70 310.06 L774.99 308.84 L775.28 307.55 L775.57 306.22 L775.87 304.85 L776.16 303.45 L776.45 302.03 L776.75 300.61 L777.04 299.20 L777.33 297.81 L777.63 296.45 L777.92 295.14 L778.21 293.87 L778.51 292.68 L778.80 291.56 L779.09 290.53 L779.39 289.60 L779.68 288.79 L779.97 288.02 L780.27 287.27 L780.56 286.52 L780.85 285.78 L781.14 285.05 L781.44 284.33 L781.73 283.62 L782.02 282.91 L782.32 282.22 L782.61 281.53 L782.90 280.86 L783.20 280.20 L783.49 279.54 L783.78 278.90 L784.08 278.27 L784.37 277.65 L784.66 277.05 L784.96 276.45 L785.25 275.87 L785.54 275.30 L785.84 274.74 L786.13 274.20 L786.42 273.67 L786.71 273.15 L787.01 272.65 L787.30 272.16 L787.59 271.69 L787.89 271.23 L788.18 270.79 L788.47 270.36 L788.77 269.95 L789.06 269.56 L789.35 269.18 L789.65 268.81 L789.94 268.45 L790.23 268.10 L790.53 267.75 L790.82 267.41 L791.11 267.07 L791.41 266.74 L791.70 266.42 L791.99 266.10 L792.28 265.79 L792.58 265.48 L792.87 265.17 L793.16 264.88 L793.46 264.58 L793.75 264.30 L794.04 264.01 L794.34 263.73 L794.63 263.46 L794.92 263.19 L795.22 262.92 L795.51 262.66 L795.80 262.40 L796.10 262.15 L796.39 261.89 L796.68 261.65 L796.98 261.40 L797.27 261.16 L797.56 260.92 L797.86 260.69 L798.15 260.45 L798.44 260.22 L798.73 259.99 L799.03 259.77 L799.32 259.54 L799.61 259.32 L799.91 259.10 L800.20 258.88 L800.49 258.67 L800.79 258.45 L801.08 258.24 L801.37 258.03 L801.67 257.82 L801.96 257.61 L802.25 257.40 L802.55 257.19 L802.84 256.98 L803.13 256.77 L803.43 256.56 L803.72 256.35 L804.01 256.15 L804.30 255.94 L804.60 255.73 L804.89 255.52 L805.18 255.31 L805.48 255.11 L805.77 254.90 L806.06 254.69 L806.36 254.48 L806.65 254.28 L806.94 254.08 L807.24 253.87 L807.53 253.67 L807.82 253.47 L808.12 253.27 L808.41 253.07 L808.70 252.87 L809.00 252.67 L809.29 252.47 L809.58 252.27 L809.87 252.08 L810.17 251.88 L810.46 251.69 L810.75 251.49 L811.05 251.30 L811.34 251.11 L811.63 250.92 L811.93 250.73 L812.22 250.54 L812.51 250.35 L812.81 250.17 L813.10 249.98 L813.39 249.79 L813.69 249.61 L813.98 249.43 L814.27 249.24 L814.57 249.06 L814.86 248.88 L815.15 248.70 L815.44 248.52 L815.74 248.35 L816.03 248.17 L816.32 247.99 L816.62 247.82 L816.91 247.65 L817.20 247.47 L817.50 247.30 L817.79 247.13 L818.08 246.96 L818.38 246.79 L818.67 246.63 L818.96 246.46 L819.26 246.29 L819.55 246.13 L819.84 245.97 L820.14 245.80 L820.43 245.64 L820.72 245.48 L821.01 245.32 L821.31 245.16 L821.60 245.01 L821.89 244.85 L822.19 244.70 L822.48 244.54 L822.77 244.39 L823.07 244.24 L823.36 244.09 L823.65 243.94 L823.95 243.79 L824.24 243.64 L824.53 243.50 L824.83 243.35 L825.12 243.21 L825.41 243.07 L825.71 242.93 L826.00 242.79 L826.29 242.65 L826.58 242.51 L826.88 242.37 L827.17 242.24 L827.46 242.11 L827.76 241.97 L828.05 241.84 L828.34 241.71 L828.64 241.58 L828.93 241.45 L829.22 241.33 L829.52 241.20 L829.81 241.07 L830.10 240.95 L830.40 240.83 L830.69 240.71 L830.98 240.59 L831.28 240.47 L831.57 240.35 L831.86 240.23 L832.15 240.11 L832.45 239.99 L832.74 239.88 L833.03 239.77 L833.33 239.65 L833.62 239.54 L833.91 239.43 L834.21 239.32 L834.50 239.21 L834.79 239.10 L835.09 238.99 L835.38 238.88 L835.67 238.77 L835.97 238.66 L836.26 238.56 L836.55 238.45 L836.85 238.35 L837.14 238.24 L837.43 238.14 L837.72 238.04 L838.02 237.93 L838.31 237.83 L838.60 237.73 L838.90 237.63 L839.19 237.53 L839.48 237.43 L839.78 237.33 L840.07 237.23 L840.36 237.13 L840.66 237.03 L840.95 236.94 L841.24 236.84 L841.54 236.74 L841.83 236.65 L842.12 236.55 L842.42 236.45 L842.71 236.36 L843.00 236.26 L843.29 236.17 L843.59 236.07 L843.88 235.98 L844.17 235.88 L844.47 235.79 L844.76 235.69 L845.05 235.60 L845.35 235.51 L845.64 235.41 L845.93 235.32 L846.23 235.22 L846.52 235.13 L846.81 235.04 L847.11 234.94 L847.40 234.85 L847.69 234.76 L847.99 234.66 L848.28 234.57 L848.57 234.48 L848.87 234.38 L849.16 234.29 L849.45 234.19 L849.74 234.10 L850.04 234.00 L850.33 233.91 L850.62 233.82 L850.92 233.72 L851.21 233.63 L851.50 233.53 L851.80 233.43 L852.09 233.34 L852.38 233.24 L852.68 233.15 L852.97 233.05 L853.26 232.95 L853.56 232.86 L853.85 232.76 L854.14 232.66 L854.44 232.56 L854.73 232.46 L855.02 232.36 L855.31 232.26 L855.61 232.16 L855.90 232.06 L856.19 231.96 L856.49 231.86 L856.78 231.76 L857.07 231.66 L857.37 231.56 L857.66 231.46 L857.95 231.35 L858.25 231.25 L858.54 231.15 L858.83 231.05 L859.13 230.95 L859.42 230.85 L859.71 230.75 L860.01 230.65 L860.30 230.55 L860.59 230.45 L860.88 230.35 L861.18 230.25 L861.47 230.15 L861.76 230.05 L862.06 229.95 L862.35 229.85 L862.64 229.75 L862.94 229.65 L863.23 229.55 L863.52 229.45 L863.82 229.35 L864.11 229.26 L864.40 229.16 L864.70 229.06 L864.99 228.96 L865.28 228.86 L865.58 228.76 L865.87 228.66 L866.16 228.56 L866.45 228.46 L866.75 228.36 L867.04 228.26 L867.33 228.16 L867.63 228.06 L867.92 227.96 L868.21 227.87 L868.51 227.77 L868.80 227.67" stroke="#00ffff" stroke-width="1" fill="none" stroke-linejoin="round"/><path d="M79.28 328.82H80.48L84.38 340.62H75.38Z" stroke="#ffff00" fill="none"/><path d="M79.88 354.50L86.88 361.50H72.88Z" stroke="#ffff00" fill="none"/><path d="M86.33 289.84H87.53L91.43 301.64H82.43Z" stroke="#ffff00" fill="none"/><path d="M86.93 354.50L93.93 361.50H79.93Z" stroke="#ffff00" fill="none"/><path d="M95.14 272.60H96.34L100.24 284.40H91.24Z" stroke="#ffff00" fill="none"/><path d="M95.74 354.50L102.74 361.50H88.74Z" stroke="#ffff00" fill="none"/><path d="M121.57 248.53H122.77L126.67 260.33H117.67Z" stroke="#ffff00" fill="none"/><path d="M122.17 354.50L129.17 361.50H115.17Z" stroke="#ffff00" fill="none"/><path d="M165.61 229.52H166.81L170.71 241.32H161.71Z" stroke="#ffff00" fill="none"/><path d="M166.21 354.50L173.21 361.50H159.21Z" stroke="#ffff00" fill="none"/><path d="M253.71 218.06H254.91L258.81 229.86H249.81Z" stroke="#ffff00" fill="none"/><path d="M254.31 354.50L261.31 361.50H247.31Z" stroke="#ffff00" fill="none"/><path d="M429.90 218.69H431.10L435.00 230.49H426.00Z" stroke="#ffff00" fill="none"/><path d="M430.50 354.50L437.50 361.50H423.50Z" stroke="#ffff00" fill="none"/><path d="M333.08 212.65H334.28L338.18 200.35H329.18Z" stroke="#ffff00" fill="none"/><path d="M333.68 354.00L341.18 361.50H326.18Z" fill="#ffff00"/><path d="M72.5 205L80 212.5L72.5 220Z" fill="#ffff00"/><path d="M438.5 205L431 212.5L438.5 220Z" fill="#ffff00"/><path d="M432 213.5L434.5 216V220M432 220.5H437.5" stroke="#000" fill="none"/><path d="M517.58 214.04H518.78L522.68 225.84H513.68Z" stroke="#00ffff" fill="none"/><path d="M518.18 354.50L525.18 361.50H511.18Z" stroke="#00ffff" fill="none"/><path d="M524.63 214.10H525.83L529.73 225.90H520.73Z" stroke="#00ffff" fill="none"/><path d="M525.23 354.50L532.23 361.50H518.23Z" stroke="#00ffff" fill="none"/><path d="M533.44 214.22H534.64L538.54 226.02H529.54Z" stroke="#00ffff" fill="none"/><path d="M534.04 354.50L541.04 361.50H527.04Z" stroke="#00ffff" fill="none"/><path d="M559.87 214.95H561.07L564.97 226.75H555.97Z" stroke="#00ffff" fill="none"/><path d="M560.47 354.50L567.47 361.50H553.47Z" stroke="#00ffff" fill="none"/><path d="M603.91 218.33H605.11L609.01 230.13H600.01Z" stroke="#00ffff" fill="none"/><path d="M604.51 354.50L611.51 361.50H597.51Z" stroke="#00ffff" fill="none"/><path d="M692.01 230.92H693.21L697.11 242.72H688.11Z" stroke="#00ffff" fill="none"/><path d="M692.61 354.50L699.61 361.50H685.61Z" stroke="#00ffff" fill="none"/><path d="M868.20 228.67H869.40L873.30 240.47H864.30Z" stroke="#00ffff" fill="none"/><path d="M868.80 354.50L875.80 361.50H861.80Z" stroke="#00ffff" fill="none"/><path d="M771.38 315.83H772.58L776.48 303.53H767.48Z" stroke="#00ffff" fill="none"/><path d="M771.98 354.00L779.48 361.50H764.48Z" fill="#00ffff"/><path d="M509 205L516.5 212.5L509 220Z" fill="#00ffff"/><path d="M878 205L870 212.5L878 220Z" fill="#00ffff"/><clipPath id="sc"><circle cx="221.7" cy="531.5" r="141.3"/></clipPath><circle cx="221.7" cy="531.5" r="141.3" stroke="#b0b0b0" fill="none"/><path d="M80.39999999999998 531.5H363.0" stroke="#b0b0b0" fill="none"/><circle cx="245.25" cy="531.5" r="117.75" stroke="#373737" fill="none"/><circle cx="268.80" cy="531.5" r="94.20" stroke="#373737" fill="none"/><circle cx="292.35" cy="531.5" r="70.65" stroke="#373737" fill="none"/><circle cx="315.90" cy="531.5" r="47.10" stroke="#373737" fill="none"/><circle cx="339.45" cy="531.5" r="23.55" stroke="#373737" fill="none"/><g clip-path="url(#sc)"><circle cx="363.00" cy="4.16" r="527.34" stroke="#373737" fill="none"/><circle cx="363.00" cy="1058.84" r="527.34" stroke="#373737" fill="none"/><circle cx="363.00" cy="286.76" r="244.74" stroke="#373737" fill="none"/><circle cx="363.00" cy="776.24" r="244.74" stroke="#373737" fill="none"/><circle cx="363.00" cy="390.20" r="141.30" stroke="#373737" fill="none"/><circle cx="363.00" cy="672.80" r="141.30" stroke="#373737" fill="none"/><circle cx="363.00" cy="449.92" r="81.58" stroke="#373737" fill="none"/><circle cx="363.00" cy="613.08" r="81.58" stroke="#373737" fill="none"/><circle cx="363.00" cy="493.64" r="37.86" stroke="#373737" fill="none"/><circle cx="363.00" cy="569.36" r="37.86" stroke="#373737" fill="none"/></g><path d="M221.93 530.78 L221.93 530.61 L221.93 530.44 L221.93 530.27 L221.93 530.09 L221.94 529.92 L221.94 529.75 L221.95 529.58 L221.96 529.41 L221.97 529.24 L221.98 529.07 L221.99 528.90 L222.01 528.73 L222.02 528.57 L222.04 528.40 L222.06 528.24 L222.08 528.07 L222.10 527.90 L222.12 527.74 L222.14 527.57 L222.16 527.41 L222.18 527.24 L222.21 527.08 L222.23 526.92 L222.25 526.75 L222.28 526.59 L222.30 526.42 L222.32 526.26 L222.35 526.09 L222.37 525.93 L222.40 525.76 L222.42 525.60 L222.44 525.43 L222.46 525.26 L222.48 525.10 L222.51 524.93 L222.53 524.76 L222.55 524.59 L222.57 524.43 L222.60 524.26 L222.62 524.09 L222.65 523.92 L222.67 523.75 L222.70 523.59 L222.72 523.42 L222.75 523.25 L222.77 523.08 L222.80 522.91 L222.83 522.74 L222.85 522.58 L222.88 522.41 L222.91 522.24 L222.93 522.07 L222.96 521.90 L222.99 521.73 L223.02 521.56 L223.04 521.39 L223.07 521.22 L223.10 521.05 L223.13 520.88 L223.15 520.71 L223.18 520.54 L223.21 520.37 L223.24 520.20 L223.27 520.03 L223.29 519.85 L223.32 519.68 L223.35 519.51 L223.37 519.34 L223.40 519.17 L223.43 518.99 L223.46 518.82 L223.48 518.65 L223.51 518.47 L223.54 518.30 L223.56 518.13 L223.59 517.95 L223.62 517.78 L223.65 517.61 L223.67 517.43 L223.70 517.26 L223.73 517.08 L223.76 516.91 L223.79 516.74 L223.82 516.56 L223.85 516.39 L223.89 516.21 L223.92 516.04 L223.95 515.86 L223.98 515.69 L224.01 515.51 L224.05 515.34 L224.08 515.16 L224.11 514.99 L224.15 514.81 L224.18 514.64 L224.22 514.46 L224.25 514.28 L224.29 514.11 L224.33 513.93 L224.36 513.76 L224.40 513.58 L224.44 513.40 L224.48 513.22 L224.52 513.05 L224.56 512.87 L224.60 512.69 L224.64 512.51 L224.68 512.34 L224.72 512.16 L224.76 511.98 L224.80 511.80 L224.85 511.62 L224.89 511.44 L224.93 511.26 L224.98 511.08 L225.02 510.90 L225.07 510.72 L225.11 510.54 L225.16 510.36 L225.21 510.18 L225.26 510.00 L225.30 509.82 L225.35 509.64 L225.40 509.45 L225.45 509.27 L225.50 509.09 L225.55 508.91 L225.61 508.72 L225.66 508.54 L225.71 508.36 L225.76 508.18 L225.82 507.99 L225.87 507.81 L225.93 507.62 L225.98 507.44 L226.04 507.25 L226.10 507.07 L226.16 506.88 L226.22 506.70 L226.27 506.51 L226.33 506.33 L226.39 506.14 L226.46 505.95 L226.52 505.77 L226.58 505.58 L226.64 505.39 L226.71 505.20 L226.77 505.02 L226.84 504.83 L226.90 504.64 L226.97 504.45 L227.04 504.26 L227.11 504.07 L227.18 503.88 L227.25 503.69 L227.32 503.50 L227.39 503.31 L227.46 503.12 L227.53 502.93 L227.60 502.74 L227.68 502.55 L227.75 502.36 L227.83 502.17 L227.90 501.98 L227.98 501.78 L228.06 501.59 L228.14 501.40 L228.22 501.21 L228.30 501.01 L228.38 500.82 L228.46 500.62 L228.54 500.43 L228.63 500.24 L228.71 500.04 L228.79 499.85 L228.88 499.65 L228.97 499.46 L229.05 499.26 L229.14 499.07 L229.23 498.87 L229.32 498.67 L229.41 498.48 L229.50 498.28 L229.59 498.08 L229.69 497.89 L229.78 497.69 L229.88 497.49 L229.97 497.30 L230.07 497.10 L230.16 496.90 L230.26 496.70 L230.36 496.50 L230.46 496.30 L230.56 496.11 L230.66 495.91 L230.77 495.71 L230.87 495.51 L230.97 495.31 L231.08 495.11 L231.18 494.91 L231.29 494.71 L231.40 494.51 L231.50 494.31 L231.61 494.11 L231.72 493.91 L231.83 493.71 L231.95 493.51 L232.06 493.31 L232.17 493.11 L232.29 492.91 L232.40 492.71 L232.52 492.51 L232.64 492.31 L232.75 492.11 L232.87 491.91 L232.99 491.71 L233.11 491.51 L233.23 491.31 L233.35 491.12 L233.48 490.92 L233.60 490.72 L233.73 490.52 L233.85 490.32 L233.98 490.12 L234.11 489.92 L234.23 489.72 L234.36 489.52 L234.49 489.33 L234.62 489.13 L234.75 488.93 L234.89 488.73 L235.02 488.54 L235.15 488.34 L235.29 488.14 L235.42 487.95 L235.56 487.75 L235.70 487.55 L235.84 487.36 L235.98 487.16 L236.12 486.97 L236.26 486.77 L236.40 486.58 L236.54 486.39 L236.68 486.19 L236.83 486.00 L236.97 485.81 L237.12 485.61 L237.26 485.42 L237.41 485.23 L237.56 485.04 L237.71 484.85 L237.86 484.66 L238.01 484.47 L238.16 484.28 L238.31 484.09 L238.46 483.90 L238.62 483.71 L238.77 483.52 L238.93 483.34 L239.08 483.15 L239.24 482.96 L239.40 482.78 L239.56 482.59 L239.71 482.41 L239.87 482.22 L240.03 482.04 L240.20 481.86 L240.36 481.67 L240.52 481.49 L240.68 481.31 L240.85 481.13 L241.01 480.95 L241.18 480.77 L241.34 480.59 L241.51 480.41 L241.68 480.24 L241.85 480.06 L242.02 479.88 L242.19 479.71 L242.36 479.53 L242.53 479.36 L242.70 479.19 L242.87 479.01 L243.04 478.84 L243.22 478.67 L243.39 478.50 L243.57 478.33 L243.74 478.16 L243.92 477.99 L244.10 477.83 L244.27 477.66 L244.45 477.49 L244.63 477.33 L244.81 477.16 L244.99 477.00 L245.17 476.84 L245.35 476.68 L245.53 476.51 L245.72 476.35 L245.90 476.20 L246.08 476.04 L246.27 475.88 L246.45 475.72 L246.64 475.57 L246.82 475.41 L247.01 475.26 L247.20 475.10 L247.38 474.95 L247.57 474.80 L247.76 474.65 L247.95 474.50 L248.14 474.35 L248.33 474.20 L248.52 474.05 L248.71 473.91 L248.90 473.76 L249.09 473.62 L249.29 473.48 L249.48 473.33 L249.67 473.19 L249.87 473.05 L250.06 472.91 L250.25 472.77 L250.45 472.64 L250.65 472.50 L250.84 472.36 L251.04 472.23 L251.23 472.10 L251.43 471.96 L251.63 471.83 L251.83 471.70 L252.03 471.57 L252.22 471.44 L252.42 471.32 L252.62 471.19 L252.82 471.07 L253.02 470.94 L253.22 470.82 L253.43 470.70 L253.63 470.58 L253.83 470.46 L254.03 470.34 L254.23 470.22 L254.44 470.10 L254.64 469.99 L254.84 469.87 L255.05 469.76 L255.25 469.65 L255.45 469.54 L255.66 469.43 L255.86 469.32 L256.07 469.21 L256.27 469.10 L256.48 469.00 L256.69 468.89 L256.89 468.79 L257.10 468.69 L257.31 468.59 L257.51 468.49 L257.72 468.39 L257.93 468.29 L258.13 468.20 L258.34 468.10 L258.55 468.01 L258.76 467.91 L258.97 467.82 L259.17 467.73 L259.38 467.64 L259.59 467.55 L259.80 467.47 L260.01 467.38 L260.22 467.30 L260.43 467.21 L260.64 467.13 L260.85 467.05 L261.06 466.97 L261.27 466.89 L261.48 466.81 L261.69 466.73 L261.90 466.65 L262.11 466.57 L262.32 466.50 L262.53 466.42 L262.74 466.35 L262.95 466.28 L263.16 466.20 L263.38 466.13 L263.59 466.06 L263.80 465.99 L264.01 465.92 L264.22 465.85 L264.43 465.79 L264.64 465.72 L264.85 465.65 L265.07 465.59 L265.28 465.53 L265.49 465.46 L265.70 465.40 L265.91 465.34 L266.12 465.28 L266.34 465.22 L266.55 465.16 L266.76 465.10 L266.97 465.04 L267.18 464.99 L267.39 464.93 L267.60 464.87 L267.82 464.82 L268.03 464.77 L268.24 464.71 L268.45 464.66 L268.66 464.61 L268.87 464.56 L269.08 464.51 L269.30 464.46 L269.51 464.42 L269.72 464.37 L269.93 464.32 L270.14 464.28 L270.35 464.23 L270.56 464.19 L270.77 464.14 L270.98 464.10 L271.20 464.06 L271.41 464.02 L271.62 463.98 L271.83 463.94 L272.04 463.90 L272.25 463.86 L272.46 463.83 L272.67 463.79 L272.88 463.76 L273.09 463.72 L273.30 463.69 L273.51 463.65 L273.72 463.62 L273.93 463.59 L274.14 463.56 L274.35 463.53 L274.55 463.50 L274.76 463.47 L274.97 463.44 L275.18 463.41 L275.39 463.39 L275.60 463.36 L275.81 463.34 L276.01 463.31 L276.22 463.29 L276.43 463.26 L276.64 463.24 L276.85 463.22 L277.05 463.20 L277.26 463.18 L277.47 463.16 L277.67 463.14 L277.88 463.12 L278.09 463.10 L278.29 463.09 L278.50 463.07 L278.71 463.06 L278.91 463.04 L279.12 463.03 L279.32 463.01 L279.53 463.00 L279.73 462.99 L279.94 462.98 L280.14 462.97 L280.35 462.96 L280.55 462.95 L280.76 462.94 L280.96 462.93 L281.16 462.92 L281.37 462.91 L281.57 462.91 L281.77 462.90 L281.98 462.90 L282.18 462.89 L282.38 462.89 L282.59 462.89 L282.79 462.88 L282.99 462.88 L283.19 462.88 L283.39 462.88 L283.59 462.88 L283.80 462.88 L284.00 462.88 L284.20 462.88 L284.40 462.89 L284.60 462.89 L284.80 462.89 L285.00 462.90 L285.20 462.90 L285.40 462.91 L285.60 462.91 L285.79 462.92 L285.99 462.92 L286.19 462.93 L286.39 462.94 L286.59 462.95 L286.79 462.96 L286.98 462.97 L287.18 462.98 L287.38 462.99 L287.57 463.00 L287.77 463.01 L287.97 463.03 L288.16 463.04 L288.36 463.05 L288.55 463.07 L288.75 463.08 L288.94 463.10 L289.14 463.11 L289.33 463.13 L289.53 463.15 L289.72 463.16 L289.92 463.18 L290.11 463.20 L290.30 463.22 L290.50 463.24 L290.69 463.26 L290.88 463.28 L291.07 463.30 L291.27 463.32 L291.46 463.34 L291.65 463.37 L291.84 463.39 L292.03 463.41 L292.22 463.44 L292.41 463.46 L292.60 463.49 L292.80 463.51 L292.99 463.54 L293.17 463.57 L293.36 463.59 L293.55 463.62 L293.74 463.65 L293.93 463.68 L294.12 463.70 L294.31 463.73 L294.50 463.76 L294.68 463.79 L294.87 463.83 L295.06 463.86 L295.24 463.89 L295.43 463.92 L295.62 463.95 L295.80 463.99 L295.99 464.02 L296.18 464.05 L296.36 464.09 L296.55 464.12 L296.73 464.16 L296.92 464.19 L297.10 464.23 L297.28 464.27 L297.47 464.30 L297.65 464.34 L297.83 464.38 L298.02 464.42 L298.20 464.46 L298.38 464.50 L298.57 464.53 L298.75 464.57 L298.93 464.62 L299.11 464.66 L299.29 464.70 L299.47 464.74 L299.65 464.78 L299.84 464.82 L300.02 464.87 L300.20 464.91 L300.38 464.95 L300.56 465.00 L300.74 465.04 L300.91 465.09 L301.09 465.13 L301.27 465.18 L301.45 465.22 L301.63 465.27 L301.81 465.32 L301.98 465.36 L302.16 465.41 L302.34 465.46 L302.52 465.51 L302.69 465.56 L302.87 465.61 L303.05 465.66 L303.22 465.71 L303.40 465.76 L303.57 465.81 L303.75 465.86 L303.92 465.91 L304.10 465.96 L304.27 466.01 L304.45 466.07 L304.62 466.12 L304.79 466.17 L304.97 466.23 L305.14 466.28 L305.31 466.33 L305.49 466.39 L305.66 466.44 L305.83 466.50 L306.00 466.56 L306.18 466.61 L306.35 466.67 L306.52 466.72 L306.69 466.78 L306.86 466.84 L307.03 466.90 L307.20 466.96 L307.37 467.01 L307.54 467.07 L307.71 467.13 L307.88 467.19 L308.05 467.25 L308.22 467.31 L308.39 467.37 L308.56 467.43 L308.73 467.49 L308.90 467.56 L309.07 467.62 L309.23 467.68 L309.40 467.74 L309.57 467.81 L309.74 467.87 L309.90 467.93 L310.07 468.00 L310.24 468.06 L310.40 468.13 L310.57 468.19 L310.74 468.26 L310.90 468.32 L311.07 468.39 L311.23 468.45 L311.40 468.52 L311.56 468.59 L311.73 468.65 L311.89 468.72 L312.06 468.79 L312.22 468.86 L312.38 468.92 L312.55 468.99 L312.71 469.06 L312.87 469.13 L313.04 469.20 L313.20 469.27 L313.36 469.34 L313.52 469.41 L313.69 469.48 L313.85 469.55 L314.01 469.63 L314.17 469.70 L314.33 469.77 L314.49 469.84 L314.66 469.91 L314.82 469.99 L314.98 470.06 L315.14 470.13 L315.30 470.21 L315.46 470.28 L315.62 470.36 L315.78 470.43 L315.94 470.51 L316.10 470.58 L316.26 470.66 L316.41 470.73 L316.57 470.81 L316.73 470.89 L316.89 470.96 L317.05 471.04 L317.21 471.12 L317.36 471.20 L317.52 471.27 L317.68 471.35 L317.84 471.43 L317.99 471.51 L318.15 471.59 L318.31 471.67 L318.46 471.75 L318.62 471.83 L318.77 471.91 L318.93 471.99 L319.09 472.07 L319.24 472.15 L319.40 472.23 L319.55 472.31 L319.71 472.40 L319.86 472.48 L320.02 472.56 L320.17 472.64 L320.33 472.73 L320.48 472.81 L320.63 472.90 L320.79 472.98 L320.94 473.06 L321.09 473.15 L321.25 473.23 L321.40 473.32 L321.55 473.40 L321.71 473.49 L321.86 473.58 L322.01 473.66 L322.16 473.75 L322.32 473.84 L322.47 473.92 L322.62 474.01 L322.77 474.10 L322.92 474.19 L323.07 474.28 L323.22 474.36 L323.38 474.45 L323.53 474.54 L323.68 474.63 L323.83 474.72 L323.98 474.81 L324.13 474.90 L324.28 474.99 L324.43 475.08 L324.58 475.18 L324.73 475.27 L324.87 475.36 L325.02 475.45 L325.17 475.54 L325.32 475.64 L325.47 475.73 L325.62 475.82 L325.77 475.92 L325.92 476.01 L326.06 476.10 L326.21 476.20 L326.36 476.29 L326.51 476.39 L326.65 476.48 L326.80 476.58 L326.95 476.67 L327.09 476.77 L327.24 476.87 L327.39 476.96 L327.53 477.06 L327.68 477.16 L327.83 477.25 L327.97 477.35 L328.12 477.45 L328.26 477.55 L328.41 477.65 L328.55 477.75 L328.70 477.85 L328.84 477.94 L328.99 478.04 L329.13 478.14 L329.28 478.24 L329.42 478.35 L329.57 478.45 L329.71 478.55 L329.85 478.65 L330.00 478.75 L330.14 478.85 L330.28 478.96 L330.43 479.06 L330.57 479.16 L330.71 479.26 L330.85 479.37 L331.00 479.47 L331.14 479.58 L331.28 479.68 L331.42 479.79 L331.56 479.89 L331.70 480.00 L331.85 480.10 L331.99 480.21 L332.13 480.31 L332.27 480.42 L332.41 480.53 L332.55 480.64 L332.69 480.74 L332.83 480.85 L332.97 480.96 L333.11 481.07 L333.25 481.18 L333.38 481.29 L333.52 481.39 L333.66 481.50 L333.80 481.61 L333.94 481.72 L334.08 481.84 L334.21 481.95 L334.35 482.06 L334.49 482.17 L334.63 482.28 L334.76 482.39 L334.90 482.51 L335.04 482.62 L335.17 482.73 L335.31 482.84 L335.44 482.96 L335.58 483.07 L335.72 483.19 L335.85 483.30 L335.99 483.42 L336.12 483.53 L336.26 483.65 L336.39 483.76 L336.53 483.88 L336.66 484.00 L336.79 484.11 L336.93 484.23 L337.06 484.35 L337.19 484.46 L337.33 484.58 L337.46 484.70 L337.59 484.82 L337.73 484.94 L337.86 485.06 L337.99 485.18 L338.12 485.30 L338.25 485.42 L338.39 485.54 L338.52 485.66 L338.65 485.78 L338.78 485.90 L338.91 486.02 L339.04 486.15 L339.17 486.27 L339.30 486.39 L339.43 486.51 L339.56 486.64 L339.69 486.76 L339.82 486.89 L339.95 487.01 L340.08 487.14 L340.21 487.26 L340.33 487.39 L340.46 487.51 L340.59 487.64 L340.72 487.76 L340.84 487.89 L340.97 488.02 L341.10 488.15 L341.23 488.27 L341.35 488.40 L341.48 488.53 L341.61 488.66 L341.73 488.79 L341.86 488.92 L341.98 489.05 L342.11 489.18 L342.23 489.31 L342.36 489.44 L342.48 489.57 L342.61 489.70 L342.73 489.83 L342.85 489.96 L342.98 490.10 L343.10 490.23 L343.22 490.36 L343.35 490.50 L343.47 490.63 L343.59 490.76 L343.71 490.90 L343.84 491.03 L343.96 491.17 L344.08 491.30 L344.20 491.44 L344.32 491.58 L344.44 491.71 L344.56 491.85 L344.68 491.99 L344.80 492.12 L344.92 492.26 L345.04 492.40 L345.16 492.54 L345.28 492.68 L345.40 492.82 L345.52 492.96 L345.64 493.10 L345.75 493.24 L345.87 493.38 L345.99 493.52 L346.11 493.66 L346.22 493.80 L346.34 493.94 L346.46 494.08 L346.57 494.23 L346.69 494.37 L346.80 494.51 L346.92 494.66 L347.03 494.80 L347.15 494.95 L347.26 495.09 L347.38 495.24 L347.49 495.38 L347.61 495.53 L347.72 495.67 L347.83 495.82 L347.94 495.97 L348.06 496.11 L348.17 496.26 L348.28 496.41 L348.39 496.56 L348.50 496.71 L348.62 496.85 L348.73 497.00 L348.84 497.15 L348.95 497.30 L349.06 497.45 L349.17 497.60 L349.28 497.76 L349.38 497.91 L349.49 498.06 L349.60 498.21 L349.71 498.36 L349.82 498.52 L349.92 498.67 L350.03 498.82 L350.14 498.98 L350.25 499.13 L350.35 499.29 L350.46 499.44 L350.56 499.60 L350.67 499.75 L350.77 499.91 L350.88 500.06 L350.98 500.22 L351.09 500.38 L351.19 500.54 L351.29 500.69 L351.40 500.85 L351.50 501.01 L351.60 501.17 L351.70 501.33 L351.80 501.49 L351.90 501.65 L352.01 501.81 L352.11 501.97 L352.21 502.13 L352.31 502.29 L352.41 502.45 L352.51 502.61 L352.60 502.78 L352.70 502.94 L352.80 503.10 L352.90 503.27 L353.00 503.43 L353.09 503.59 L353.19 503.76 L353.29 503.92 L353.38 504.09 L353.48 504.25 L353.57 504.42 L353.67 504.59 L353.76 504.75 L353.86 504.92 L353.95 505.09 L354.04 505.26 L354.13 505.42 L354.23 505.59 L354.32 505.76 L354.41 505.93 L354.50 506.10 L354.59 506.27 L354.68 506.44 L354.77 506.61 L354.86 506.78 L354.95 506.95 L355.04 507.12 L355.13 507.30 L355.22 507.47 L355.31 507.64 L355.39 507.81 L355.48 507.99 L355.57 508.16 L355.65 508.33 L355.74 508.51 L355.82 508.68 L355.91 508.86 L355.99 509.03 L356.08 509.21 L356.16 509.38 L356.24 509.56 L356.33 509.74 L356.41 509.91 L356.49 510.09 L356.57 510.27 L356.65 510.45 L356.73 510.63 L356.81 510.80 L356.89 510.98 L356.97 511.16 L357.05 511.34 L357.13 511.52 L357.20 511.70 L357.28 511.88 L357.36 512.06 L357.44 512.25 L357.51 512.43 L357.59 512.61 L357.66 512.79 L357.74 512.97 L357.81 513.16 L357.88 513.34 L357.96 513.52 L358.03 513.71 L358.10 513.89 L358.17 514.08 L358.24 514.26 L358.31 514.45 L358.38 514.63 L358.45 514.82 L358.52 515.00 L358.59 515.19 L358.66 515.38 L358.73 515.56 L358.79 515.75 L358.86 515.94 L358.93 516.13 L358.99 516.31 L359.06 516.50 L359.12 516.69 L359.18 516.88 L359.25 517.07 L359.31 517.26 L359.37 517.45 L359.44 517.64 L359.50 517.83 L359.56 518.02 L359.62 518.21 L359.68 518.40 L359.74 518.60 L359.79 518.79 L359.85 518.98 L359.91 519.17 L359.97 519.36 L360.02 519.56 L360.08 519.75 L360.14 519.94 L360.19 520.14 L360.24 520.33 L360.30 520.53 L360.35 520.72 L360.40 520.92 L360.46 521.11 L360.51 521.31 L360.56 521.50 L360.61 521.70 L360.66 521.90 L360.71 522.09 L360.75 522.29 L360.80 522.49 L360.85 522.68 L360.90 522.88 L360.94 523.08 L360.99 523.28 L361.03 523.48 L361.08 523.67 L361.12 523.87 L361.16 524.07 L361.21 524.27 L361.25 524.47 L361.29 524.67 L361.33 524.87 L361.37 525.07 L361.41 525.27 L361.45 525.47 L361.49 525.67 L361.53 525.87 L361.56 526.07 L361.60 526.28 L361.63 526.48 L361.67 526.68 L361.70 526.88 L361.74 527.08 L361.77 527.29 L361.80 527.49 L361.84 527.69 L361.87 527.89 L361.90 528.10 L361.93 528.30 L361.96 528.50 L361.99 528.71 L362.02 528.91 L362.04 529.12 L362.07 529.32 L362.10 529.52 L362.12 529.73 L362.15 529.93 L362.17 530.14 L362.19 530.34 L362.22 530.55 L362.24 530.75 L362.26 530.96 L362.28 531.17 L362.30 531.37 L362.32 531.58 L362.34 531.78 L362.36 531.99 L362.38 532.20 L362.39 532.40 L362.41 532.61 L362.42 532.82 L362.44 533.02 L362.45 533.23 L362.47 533.44 L362.48 533.65 L362.49 533.85 L362.50 534.06 L362.51 534.27 L362.52 534.48 L362.53 534.68 L362.54 534.89 L362.55 535.10 L362.56 535.31 L362.56 535.52 L362.57 535.73 L362.57 535.93 L362.58 536.14 L362.58 536.35 L362.59 536.56 L362.59 536.77 L362.59 536.98 L362.59 537.19 L362.59 537.40 L362.59 537.61 L362.59 537.81 L362.59 538.02 L362.58 538.23 L362.58 538.44 L362.58 538.65 L362.57 538.86 L362.57 539.07 L362.56 539.28 L362.55 539.49 L362.55 539.70 L362.54 539.91 L362.53 540.12 L362.52 540.33 L362.51 540.54 L362.50 540.75 L362.48 540.96 L362.47 541.17 L362.46 541.38 L362.44 541.59 L362.43 541.80 L362.41 542.00 L362.40 542.21 L362.38 542.42 L362.36 542.63 L362.34 542.84 L362.32 543.05 L362.30 543.26 L362.28 543.47 L362.26 543.68 L362.24 543.89 L362.22 544.10 L362.19 544.31 L362.17 544.52 L362.14 544.73 L362.12 544.94 L362.09 545.15 L362.06 545.35 L362.03 545.56 L362.00 545.77 L361.97 545.98 L361.94 546.19 L361.91 546.40 L361.88 546.61 L361.85 546.81 L361.81 547.02 L361.78 547.23 L361.75 547.44 L361.71 547.65 L361.67 547.85 L361.64 548.06 L361.60 548.27 L361.56 548.48 L361.52 548.68 L361.48 548.89 L361.44 549.10 L361.40 549.31 L361.35 549.51 L361.31 549.72 L361.27 549.93 L361.22 550.13 L361.18 550.34 L361.13 550.54 L361.09 550.75 L361.04 550.96 L360.99 551.16 L360.94 551.37 L360.89 551.57 L360.84 551.78 L360.79 551.98 L360.74 552.19 L360.68 552.39 L360.63 552.59 L360.58 552.80 L360.52 553.00 L360.47 553.20 L360.41 553.41 L360.35 553.61 L360.29 553.81 L360.24 554.02 L360.18 554.22 L360.12 554.42 L360.06 554.62 L359.99 554.82 L359.93 555.03 L359.87 555.23 L359.81 555.43 L359.74 555.63 L359.68 555.83 L359.61 556.03 L359.54 556.23 L359.48 556.43 L359.41 556.63 L359.34 556.83 L359.27 557.02 L359.20 557.22 L359.13 557.42 L359.06 557.62 L358.99 557.82 L358.91 558.01 L358.84 558.21 L358.76 558.41 L358.69 558.60 L358.61 558.80 L358.54 558.99 L358.46 559.19 L358.38 559.38 L358.30 559.58 L358.22 559.77 L358.14 559.97 L358.06 560.16 L357.98 560.35 L357.90 560.55 L357.82 560.74 L357.73 560.93 L357.65 561.12 L357.56 561.31 L357.48 561.50 L357.39 561.69 L357.31 561.88 L357.22 562.07 L357.13 562.26 L357.04 562.45 L356.95 562.64 L356.86 562.83 L356.77 563.02 L356.68 563.21 L356.59 563.39 L356.50 563.58 L356.40 563.76 L356.31 563.95 L356.21 564.14 L356.12 564.32 L356.02 564.51 L355.93 564.69 L355.83 564.87 L355.73 565.06 L355.63 565.24 L355.53 565.42 L355.43 565.60 L355.33 565.78 L355.23 565.97 L355.13 566.15 L355.03 566.33 L354.92 566.51 L354.82 566.68 L354.72 566.86 L354.61 567.04 L354.51 567.22 L354.40 567.40 L354.29 567.57 L354.19 567.75 L354.08 567.92 L353.97 568.10 L353.86 568.27 L353.75 568.45 L353.64 568.62 L353.53 568.79 L353.42 568.97 L353.31 569.14 L353.20 569.31 L353.08 569.48 L352.97 569.65 L352.86 569.82 L352.74 569.99 L352.63 570.16 L352.51 570.33 L352.39 570.50 L352.28 570.67 L352.16 570.83 L352.04 571.00 L351.92 571.16 L351.80 571.33 L351.68 571.49 L351.56 571.66 L351.44 571.82 L351.32 571.99 L351.20 572.15 L351.08 572.31 L350.96 572.47 L350.83 572.63 L350.71 572.79 L350.59 572.95 L350.46 573.11 L350.34 573.27 L350.21 573.43 L350.08 573.58 L349.96 573.74 L349.83 573.90 L349.70 574.05 L349.57 574.21 L349.45 574.36 L349.32 574.52 L349.19 574.67 L349.06 574.82 L348.93 574.97 L348.80 575.13 L348.67 575.28 L348.53 575.43 L348.40 575.58 L348.27 575.72 L348.14 575.87 L348.00 576.02 L347.87 576.17 L347.73 576.31 L347.60 576.46 L347.46 576.61 L347.33 576.75 L347.19 576.89 L347.06 577.04 L346.92 577.18 L346.78 577.32 L346.65 577.46 L346.51 577.61 L346.37 577.75 L346.23 577.89 L346.09 578.02 L345.95 578.16 L345.81 578.30 L345.67 578.44 L345.53 578.57 L345.39 578.71 L345.25 578.84 L345.11 578.98 L344.96 579.11 L344.82 579.25 L344.68 579.38 L344.54 579.51 L344.39 579.64 L344.25 579.77 L344.11 579.90 L343.96 580.03 L343.82 580.16 L343.67 580.29 L343.53 580.42 L343.38 580.54 L343.23 580.67 L343.09 580.79 L342.94 580.92 L342.79 581.04 L342.65 581.17 L342.50 581.29 L342.35 581.41 L342.20 581.53 L342.06 581.65 L341.91 581.77 L341.76 581.89 L341.61 582.01 L341.46 582.13 L341.31 582.25 L341.16 582.36 L341.01 582.48 L340.86 582.60 L340.71 582.71 L340.56 582.83 L340.41 582.94 L340.26 583.05 L340.11 583.16 L339.95 583.28 L339.80 583.39 L339.65 583.50 L339.50 583.61 L339.35 583.71 L339.19 583.82 L339.04 583.93 L338.89 584.04 L338.73 584.14 L338.58 584.25 L338.43 584.35 L338.27 584.46 L338.12 584.56 L337.96 584.66 L337.81 584.77 L337.65 584.87 L337.50 584.97 L337.34 585.07 L337.19 585.17 L337.03 585.27 L336.88 585.36 L336.72 585.46 L336.57 585.56 L336.41 585.65 L336.26 585.75 L336.10 585.84 L335.94 585.94 L335.79 586.03 L335.63 586.12 L335.47 586.22 L335.32 586.31 L335.16 586.40 L335.00 586.49 L334.85 586.58 L334.69 586.67 L334.53 586.76 L334.38 586.84 L334.22 586.93 L334.06 587.02 L333.90 587.10 L333.75 587.19 L333.59 587.27 L333.43 587.35 L333.27 587.44 L333.11 587.52 L332.96 587.60 L332.80 587.68 L332.64 587.76 L332.48 587.84 L332.32 587.92 L332.17 588.00 L332.01 588.08 L331.85 588.15 L331.69 588.23 L331.53 588.30 L331.37 588.38 L331.22 588.45 L331.06 588.53 L330.90 588.60 L330.74 588.67 L330.58 588.75 L330.42 588.82 L330.27 588.89 L330.11 588.96 L329.95 589.03 L329.79 589.10 L329.63 589.16 L329.47 589.23 L329.31 589.30 L329.16 589.36 L329.00 589.43 L328.84 589.49 L328.68 589.56 L328.52 589.62 L328.36 589.69 L328.21 589.75 L328.05 589.81 L327.89 589.87 L327.73 589.93 L327.57 589.99 L327.42 590.05 L327.26 590.11 L327.10 590.17 L326.94 590.23 L326.78 590.28 L326.63 590.34 L326.47 590.39 L326.31 590.45 L326.15 590.50 L325.99 590.56 L325.84 590.61 L325.68 590.66 L325.52 590.72 L325.37 590.77 L325.21 590.82 L325.05 590.87 L324.89 590.92 L324.74 590.97 L324.58 591.02 L324.42 591.06 L324.27 591.11 L324.11 591.16 L323.95 591.20 L323.80 591.25 L323.64 591.30 L323.49 591.34 L323.33 591.38 L323.17 591.43 L323.02 591.47 L322.86 591.51 L322.71 591.55 L322.55 591.60 L322.40 591.64 L322.24 591.68 L322.09 591.72 L321.93 591.75 L321.78 591.79 L321.62 591.83 L321.47 591.87" stroke="#ff00ff" stroke-width="1" fill="none" stroke-linejoin="round"/><path d="M221.33 531.13H222.53L226.43 542.93H217.43Z" stroke="#ff00ff" fill="none"/><path d="M16.24 673.50L23.24 680.50H9.24Z" stroke="#ff00ff" fill="none"/><path d="M221.88 526.13H223.08L226.98 537.93H217.98Z" stroke="#ff00ff" fill="none"/><path d="M24.58 673.50L31.58 680.50H17.58Z" stroke="#ff00ff" fill="none"/><path d="M222.87 519.75H224.07L227.97 531.55H218.97Z" stroke="#ff00ff" fill="none"/><path d="M35.00 673.50L42.00 680.50H28.00Z" stroke="#ff00ff" fill="none"/><path d="M229.00 499.07H230.20L234.10 510.87H225.10Z" stroke="#ff00ff" fill="none"/><path d="M66.26 673.50L73.26 680.50H59.26Z" stroke="#ff00ff" fill="none"/><path d="M259.61 468.30H260.81L264.71 480.10H255.71Z" stroke="#ff00ff" fill="none"/><path d="M118.37 673.50L125.37 680.50H111.37Z" stroke="#ff00ff" fill="none"/><path d="M328.04 478.81H329.24L333.14 490.61H324.14Z" stroke="#ff00ff" fill="none"/><path d="M222.58 673.50L229.58 680.50H215.58Z" stroke="#ff00ff" fill="none"/><path d="M320.87 592.87H322.07L325.97 604.67H316.97Z" stroke="#ff00ff" fill="none"/><path d="M431.00 673.50L438.00 680.50H424.00Z" stroke="#ff00ff" fill="none"/><path d="M361.55 529.45H362.75L366.65 517.15H357.65Z" stroke="#ff00ff" fill="none"/><path d="M316.46 673.00L323.96 680.50H308.96Z" fill="#ff00ff"/><path d="M517 672.5H870" stroke="#00ff00" fill="none"/><path d="M517.58 673.50H518.78L522.68 685.30H513.68Z" stroke="#00ff00" fill="none"/><path d="M518.18 673.50L525.18 680.50H511.18Z" stroke="#00ff00" fill="none"/><path d="M524.63 673.50H525.83L529.73 685.30H520.73Z" stroke="#00ff00" fill="none"/><path d="M525.23 673.50L532.23 680.50H518.23Z" stroke="#00ff00" fill="none"/><path d="M533.44 673.50H534.64L538.54 685.30H529.54Z" stroke="#00ff00" fill="none"/><path d="M534.04 673.50L541.04 680.50H527.04Z" stroke="#00ff00" fill="none"/><path d="M559.87 673.50H561.07L564.97 685.30H555.97Z" stroke="#00ff00" fill="none"/><path d="M560.47 673.50L567.47 680.50H553.47Z" stroke="#00ff00" fill="none"/><path d="M603.91 673.50H605.11L609.01 685.30H600.01Z" stroke="#00ff00" fill="none"/><path d="M604.51 673.50L611.51 680.50H597.51Z" stroke="#00ff00" fill="none"/><path d="M692.01 673.50H693.21L697.11 685.30H688.11Z" stroke="#00ff00" fill="none"/><path d="M692.61 673.50L699.61 680.50H685.61Z" stroke="#00ff00" fill="none"/><path d="M868.20 673.50H869.40L873.30 685.30H864.30Z" stroke="#00ff00" fill="none"/><path d="M868.80 673.50L875.80 680.50H861.80Z" stroke="#00ff00" fill="none"/><path d="M771.38 671.50H772.58L776.48 659.20H767.48Z" stroke="#00ff00" fill="none"/><path d="M771.98 673.00L779.48 680.50H764.48Z" fill="#00ff00"/><path d="M509 665L517 672.5L509 680Z" fill="#00ff00"/><path d="M878 665L870 672.5L878 680Z" fill="#00ff00"/>
</g></svg>
<div class="m" style="left:28.60px;top:65.75px;color:#b4b4b4">50.00</div><div class="m" style="left:466.60px;top:65.75px;color:#b4b4b4">50.00</div><div class="m" style="left:28.60px;top:93.75px;color:#b4b4b4">40.00</div><div class="m" style="left:466.60px;top:93.75px;color:#b4b4b4">40.00</div><div class="m" style="left:28.60px;top:121.75px;color:#b4b4b4">30.00</div><div class="m" style="left:466.60px;top:121.75px;color:#b4b4b4">30.00</div><div class="m" style="left:28.60px;top:149.75px;color:#b4b4b4">20.00</div><div class="m" style="left:466.60px;top:149.75px;color:#b4b4b4">20.00</div><div class="m" style="left:28.60px;top:177.75px;color:#b4b4b4">10.00</div><div class="m" style="left:466.60px;top:177.75px;color:#b4b4b4">10.00</div><div class="m" style="left:28.60px;top:205.75px;color:#ffff00">0.000</div><div class="m" style="left:466.60px;top:205.75px;color:#00ffff">0.000</div><div class="m" style="left:20.60px;top:233.75px;color:#b4b4b4">-10.00</div><div class="m" style="left:458.60px;top:233.75px;color:#b4b4b4">-10.00</div><div class="m" style="left:20.60px;top:261.75px;color:#b4b4b4">-20.00</div><div class="m" style="left:458.60px;top:261.75px;color:#b4b4b4">-20.00</div><div class="m" style="left:20.60px;top:289.75px;color:#b4b4b4">-30.00</div><div class="m" style="left:458.60px;top:289.75px;color:#b4b4b4">-30.00</div><div class="m" style="left:20.60px;top:317.75px;color:#b4b4b4">-40.00</div><div class="m" style="left:458.60px;top:317.75px;color:#b4b4b4">-40.00</div><div class="m" style="left:20.60px;top:346.75px;color:#b4b4b4">-50.00</div><div class="m" style="left:458.60px;top:346.75px;color:#b4b4b4">-50.00</div><div class="m" style="left:466.60px;top:383.75px;color:#b4b4b4">1.000</div><div class="m" style="left:458.60px;top:411.75px;color:#b4b4b4">900.0m</div><div class="m" style="left:458.60px;top:439.75px;color:#b4b4b4">800.0m</div><div class="m" style="left:458.60px;top:468.75px;color:#b4b4b4">700.0m</div><div class="m" style="left:458.60px;top:496.75px;color:#b4b4b4">600.0m</div><div class="m" style="left:458.60px;top:524.75px;color:#b4b4b4">500.0m</div><div class="m" style="left:458.60px;top:552.75px;color:#b4b4b4">400.0m</div><div class="m" style="left:458.60px;top:580.75px;color:#b4b4b4">300.0m</div><div class="m" style="left:458.60px;top:609.75px;color:#b4b4b4">200.0m</div><div class="m" style="left:458.60px;top:637.75px;color:#b4b4b4">100.0m</div><div class="m" style="left:466.60px;top:665.75px;color:#00ff00">0.000</div><div class="m" style="left:15px;top:48.75px;color:#ffff00;">Tr1 S33 Log Mag 10.00dB/ Ref 0.000dB [F2 Smo]</div><div style="position:absolute;left:453px;top:48px;width:25px;height:13px;background:#00ffff"></div><div class="m" style="left:453px;top:48.75px;color:#000;">Tr2</div><div class="m" style="left:477px;top:48.75px;color:#00ffff;"> S43 Log Mag 10.00dB/ Ref 0.000dB [F2 Smo]</div><div class="m" style="left:15px;top:366.75px;color:#ff00ff;">Tr3 S33 Smith (R+jX) Scale 1.000U [F2]</div><div class="m" style="left:453px;top:366.75px;color:#00ff00;">Tr4 Ls Lin Mag 100.0mU/ Ref 0.000U [F2 Equ]</div><div class="m" style="left:75.88095238095238px;top:341.07px;color:#ffff00;">1</div><div class="m" style="left:82.92857142857143px;top:302.09px;color:#ffff00;">2</div><div class="m" style="left:91.73809523809524px;top:284.85px;color:#ffff00;">3</div><div class="m" style="left:118.16666666666667px;top:260.78px;color:#ffff00;">4</div><div class="m" style="left:162.21428571428572px;top:241.77px;color:#ffff00;">5</div><div class="m" style="left:250.3095238095238px;top:230.31px;color:#ffff00;">6</div><div class="m" style="left:426.5px;top:230.94px;color:#ffff00;">7</div><div class="m" style="left:329.6761271428571px;top:187.40px;color:#ffff00;">8</div><div class="m" style="left:514.1809523809524px;top:226.29px;color:#00ffff;">1</div><div class="m" style="left:521.2285714285714px;top:226.35px;color:#00ffff;">2</div><div class="m" style="left:530.0380952380951px;top:226.47px;color:#00ffff;">3</div><div class="m" style="left:556.4666666666666px;top:227.20px;color:#00ffff;">4</div><div class="m" style="left:600.5142857142857px;top:230.58px;color:#00ffff;">5</div><div class="m" style="left:688.6095238095238px;top:243.17px;color:#00ffff;">6</div><div class="m" style="left:864.8px;top:240.92px;color:#00ffff;">7</div><div class="m" style="left:767.9761271428571px;top:290.58px;color:#00ffff;">8</div><div class="m" style="left:870px;top:220.75px;color:#00ffff;">2</div><div class="m" style="left:217.93330404444907px;top:543.38px;color:#ff00ff;">1</div><div class="m" style="left:218.48042690576082px;top:538.38px;color:#ff00ff;">2</div><div class="m" style="left:219.46507663971136px;top:532.00px;color:#ff00ff;">3</div><div class="m" style="left:225.60251826863305px;top:511.32px;color:#ff00ff;">4</div><div class="m" style="left:256.20590395756665px;top:480.55px;color:#ff00ff;">5</div><div class="m" style="left:324.64475301905566px;top:491.06px;color:#ff00ff;">6</div><div class="m" style="left:317.4684567899208px;top:605.12px;color:#ff00ff;">7</div><div class="m" style="left:358.14828400301997px;top:504.20px;color:#ff00ff;">8</div><div class="m" style="left:767.9761271428571px;top:646.25px;color:#00ff00;">8</div><div class="m" style="left:82px;top:74.05px;color:#ffff00;"> 1  100.00000 MHz -40.862 dB</div><div class="m" style="left:82px;top:87.05px;color:#ffff00;"> 2  500.00000 MHz -26.990 dB</div><div class="m" style="left:82px;top:100.05px;color:#ffff00;"> 3  1.0000000 GHz -20.853 dB</div><div class="m" style="left:82px;top:113.05px;color:#ffff00;"> 4  2.5000000 GHz -12.287 dB</div><div class="m" style="left:82px;top:126.05px;color:#ffff00;"> 5  5.0000000 GHz -5.5216 dB</div><div class="m" style="left:82px;top:139.05px;color:#ffff00;"> 6  10.000000 GHz -1.4432 dB</div><div class="m" style="left:82px;top:152.05px;color:#ffff00;"> 7  20.000000 GHz -1.6680 dB</div><div class="m" style="left:82px;top:165.05px;color:#ffff00;">&gt;8  14.504591 GHz -0.0540 dB</div><div class="m" style="left:520px;top:74.05px;color:#00ffff;"> 1  100.00000 MHz -0.0126 dB</div><div class="m" style="left:520px;top:87.05px;color:#00ffff;"> 2  500.00000 MHz -0.0370 dB</div><div class="m" style="left:520px;top:100.05px;color:#00ffff;"> 3  1.0000000 GHz -0.0785 dB</div><div class="m" style="left:520px;top:113.05px;color:#00ffff;"> 4  2.5000000 GHz -0.3388 dB</div><div class="m" style="left:520px;top:126.05px;color:#00ffff;"> 5  5.0000000 GHz -1.5419 dB</div><div class="m" style="left:520px;top:139.05px;color:#00ffff;"> 6  10.000000 GHz -6.0231 dB</div><div class="m" style="left:520px;top:152.05px;color:#00ffff;"> 7  20.000000 GHz -5.2199 dB</div><div class="m" style="left:520px;top:165.05px;color:#00ffff;">&gt;8  14.504591 GHz -36.773 dB</div><div class="m" style="left:18px;top:392.25px;color:#ff00ff;"> 1  100.00000 MHz  50.156 Ω   969.55 mΩ  1.5431 nH</div><div class="m" style="left:18px;top:405.25px;color:#ff00ff;"> 2  500.00000 MHz  50.349 Ω   4.5509 Ω   1.4486 nH</div><div class="m" style="left:18px;top:418.25px;color:#ff00ff;"> 3  1.0000000 GHz  50.427 Ω   9.1736 Ω   1.4600 nH</div><div class="m" style="left:18px;top:431.25px;color:#ff00ff;"> 4  2.5000000 GHz  49.664 Ω   24.978 Ω   1.5902 nH</div><div class="m" style="left:18px;top:444.25px;color:#ff00ff;"> 5  5.0000000 GHz  48.889 Ω   61.759 Ω   1.9658 nH</div><div class="m" style="left:18px;top:457.25px;color:#ff00ff;"> 6  10.000000 GHz  69.473 Ω   186.72 Ω   2.9717 nH</div><div class="m" style="left:18px;top:470.25px;color:#ff00ff;"> 7  20.000000 GHz  59.298 Ω  -158.87 Ω   50.089 fF</div><div class="m" style="left:18px;top:483.25px;color:#ff00ff;">&gt;8  14.504591 GHz  3.8044 kΩ  7.0063 kΩ  76.878 nH</div><div class="m" style="left:520px;top:392.25px;color:#00ff00;"> 1  100.00000 MHz  1.7905 nU</div><div class="m" style="left:520px;top:405.25px;color:#00ff00;"> 2  500.00000 MHz  1.6899 nU</div><div class="m" style="left:520px;top:418.25px;color:#00ff00;"> 3  1.0000000 GHz  1.6871 nU</div><div class="m" style="left:520px;top:431.25px;color:#00ff00;"> 4  2.5000000 GHz  1.7148 nU</div><div class="m" style="left:520px;top:444.25px;color:#00ff00;"> 5  5.0000000 GHz  1.8753 nU</div><div class="m" style="left:520px;top:457.25px;color:#00ff00;"> 6  10.000000 GHz  2.8508 nU</div><div class="m" style="left:520px;top:470.25px;color:#00ff00;"> 7  20.000000 GHz  1.1144 nU</div><div class="m" style="left:520px;top:483.25px;color:#00ff00;">&gt;8  14.504591 GHz  1.3999 nU</div>
</body></html>
